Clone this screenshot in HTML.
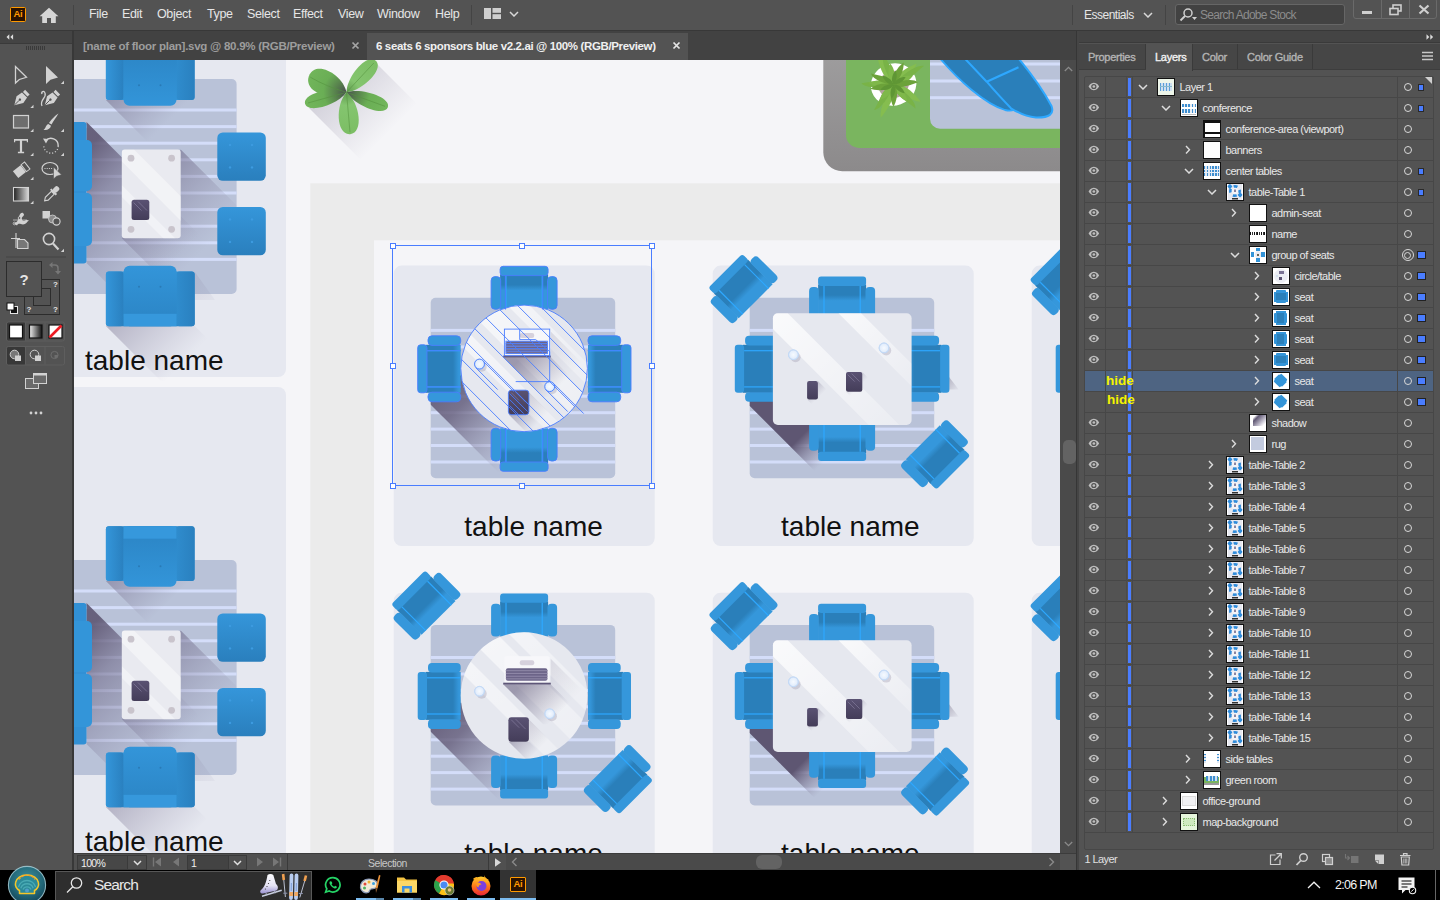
<!DOCTYPE html><html><head><meta charset="utf-8"><title>Adobe Illustrator</title><style>
*{box-sizing:border-box}
html,body{margin:0;padding:0}
body{width:1440px;height:900px;overflow:hidden;position:relative;background:#535353;font-family:"Liberation Sans",sans-serif;color:#dcdcdc;font-size:12px}
.abs{position:absolute}
#menubar{left:0;top:0;width:1440px;height:30px;background:#535353}
#menubar .mi{position:absolute;top:7px;font-size:12.5px;color:#e6e6e6;letter-spacing:-.35px;white-space:nowrap}
#line30{left:0;top:30px;width:1440px;height:1px;background:#383838}
#tabbar{left:74px;top:31px;width:1004px;height:29px;background:#424242}
.tab{position:absolute;top:2px;height:27px;font-size:11.5px;font-weight:bold;letter-spacing:-.2px;white-space:nowrap;padding-top:7px}
#tools{left:0;top:31px;width:72px;height:839px;background:#535353}
#toolsb{left:72px;top:31px;width:2px;height:839px;background:#383838}
#panel{left:1079px;top:31px;width:361px;height:839px;background:#535353}
#panelb{left:1076px;top:31px;width:3px;height:839px;background:#454545;border-left:1.2px solid #363636}
.row{position:absolute;left:0;width:348px;height:21px;border-bottom:1px solid #474747}
.row .nm{position:absolute;top:4px;font-size:11px;color:#e8e8e8;letter-spacing:-.52px;white-space:nowrap}
.th{position:absolute;top:1px;width:18px;height:18px;background:#fff;border:1px solid #111;overflow:hidden}
.tg{position:absolute;left:319px;top:6.5px;width:8px;height:8px;border:1.2px solid #d8d8d8;border-radius:50%}
.sq{position:absolute;left:333px;top:7.5px;width:6.5px;height:6.5px;background:#4a7dff;border:1px solid #2a2a2a}
.sqb{position:absolute;left:332.5px;top:6px;width:8.5px;height:8.5px;background:#4a7dff;border:1px solid #222}
#taskbar{left:0;top:870px;width:1440px;height:30px;background:#000}
#status{left:74px;top:853px;width:1002px;height:17px;background:#505050}
#vscroll{left:1060px;top:60px;width:16px;height:793px;background:#4a4a4a}
</style></head><body><div id="menubar" class="abs"><div class="abs" style="left:10px;top:7px;width:16px;height:15px;background:#2a1200;border:1.3px solid #ff9a00;border-radius:1.5px;color:#ff9a00;font-size:9.5px;font-weight:bold;line-height:12px;text-align:center;letter-spacing:-.3px">Ai</div><svg class="abs" style="left:39px;top:7px" width="20" height="17" viewBox="0 0 20 17"><path d="M10,0.8 L0.6,9.3 L3.2,9.3 L3.2,16 L8,16 L8,11 L12,11 L12,16 L16.8,16 L16.8,9.3 L19.4,9.3 Z" fill="#d6d6d6"/></svg><div class="abs" style="left:73px;top:5px;width:1px;height:20px;background:#444"></div><span class="mi" style="left:89px">File</span><span class="mi" style="left:122px">Edit</span><span class="mi" style="left:157px">Object</span><span class="mi" style="left:207px">Type</span><span class="mi" style="left:247px">Select</span><span class="mi" style="left:293px">Effect</span><span class="mi" style="left:338px">View</span><span class="mi" style="left:377px">Window</span><span class="mi" style="left:435px">Help</span><div class="abs" style="left:471px;top:5px;width:1px;height:20px;background:#444"></div><svg class="abs" style="left:484px;top:8px" width="17" height="11" viewBox="0 0 17 11"><rect x="0" y="0" width="7" height="11" fill="#cfcfcf"/><rect x="8.5" y="0" width="8.5" height="4.8" fill="#cfcfcf"/><rect x="8.5" y="6.2" width="8.5" height="4.8" fill="#cfcfcf"/></svg><svg class="abs" style="left:508.5px;top:10.5px" width="10" height="6" viewBox="0 0 10 6"><path d="M1,1 L5.0,5.0 L9.0,1" fill="none" stroke="#d8d8d8" stroke-width="1.5"/></svg><div class="abs" style="left:1072px;top:5px;width:1px;height:20px;background:#444"></div><span class="mi" style="left:1084px;font-size:12px;letter-spacing:-.5px;top:7.5px">Essentials</span><svg class="abs" style="left:1143.0px;top:12.0px" width="10" height="6" viewBox="0 0 10 6"><path d="M1,1 L5.0,5.0 L9.0,1" fill="none" stroke="#d8d8d8" stroke-width="1.5"/></svg><div class="abs" style="left:1165px;top:5px;width:1px;height:20px;background:#444"></div><div class="abs" style="left:1175px;top:4px;width:170px;height:21px;background:#424242;border:1px solid #666;border-radius:3px"></div><svg class="abs" style="left:1179px;top:8px" width="20" height="14" viewBox="0 0 20 14"><circle cx="9" cy="5" r="4" fill="none" stroke="#d0d0d0" stroke-width="1.5"/><path d="M6,8 L1.5,12.5" stroke="#d0d0d0" stroke-width="1.8"/><path d="M13,9 h5 l-2.5,3z" fill="#d0d0d0"/></svg><span class="mi" style="left:1200px;top:7.5px;color:#8c8c8c;font-size:12px;letter-spacing:-.72px">Search Adobe Stock</span><div class="abs" style="left:1353px;top:-2px;width:84px;height:21px;border:1px solid #6a6a6a;border-radius:3px"></div><div class="abs" style="left:1381px;top:0;width:1px;height:18px;background:#6a6a6a"></div><div class="abs" style="left:1409px;top:0;width:1px;height:18px;background:#6a6a6a"></div><div class="abs" style="left:1362px;top:11px;width:10px;height:3px;background:#cfcfcf"></div><svg class="abs" style="left:1389px;top:4px" width="13" height="12" viewBox="0 0 13 12"><rect x="4" y="1" width="8" height="6" fill="none" stroke="#cfcfcf" stroke-width="1.6"/><rect x="1" y="4.5" width="8" height="6" fill="#535353" stroke="#cfcfcf" stroke-width="1.6"/></svg><svg class="abs" style="left:1418px;top:4px" width="12" height="11" viewBox="0 0 12 11"><path d="M1.5,1.5 L10.5,9.5 M10.5,1.5 L1.5,9.5" stroke="#cfcfcf" stroke-width="2.2"/></svg></div><div id="line30" class="abs"></div><div id="tabbar" class="abs"><div class="tab" style="left:0;width:292.5px;color:#9d9d9d;padding-left:9px;letter-spacing:-.26px">[name of floor plan].svg @ 80.9% (RGB/Preview)</div><svg class="abs" style="left:277px;top:10px" width="9" height="9" viewBox="0 0 9 9"><path d="M1.5,1.5 L7.5,7.5 M7.5,1.5 L1.5,7.5" stroke="#a5a5a5" stroke-width="1.7"/></svg><div class="tab" style="left:292.5px;width:321px;background:#535353;color:#f0f0f0;padding-left:9.5px;letter-spacing:-.37px">6 seats 6 sponsors blue v2.2.ai @ 100% (RGB/Preview)</div><svg class="abs" style="left:598px;top:10px" width="9" height="9" viewBox="0 0 9 9"><path d="M1.5,1.5 L7.5,7.5 M7.5,1.5 L1.5,7.5" stroke="#e6e6e6" stroke-width="1.7"/></svg></div><div id="tools" class="abs"><div class="abs" style="left:0;top:0;width:72px;height:11.5px;background:#444"></div><div class="abs" style="left:0;top:11.5px;width:72px;height:1px;background:#3a3a3a"></div><svg class="abs" style="left:6px;top:3px" width="8" height="6" viewBox="0 0 8 6"><path d="M3.300,0.300 L0.500,3 L3.300,5.700z M7.100,0.300 L4.300,3 L7.100,5.700z" fill="#dcdcdc"/></svg><svg class="abs" style="left:26px;top:15px" width="20" height="5" viewBox="0 0 20 5"><rect x="0" y="0" width="1" height="4" fill="#3a3a3a"/><rect x="2" y="0" width="1" height="4" fill="#3a3a3a"/><rect x="4" y="0" width="1" height="4" fill="#3a3a3a"/><rect x="6" y="0" width="1" height="4" fill="#3a3a3a"/><rect x="8" y="0" width="1" height="4" fill="#3a3a3a"/><rect x="10" y="0" width="1" height="4" fill="#3a3a3a"/><rect x="12" y="0" width="1" height="4" fill="#3a3a3a"/><rect x="14" y="0" width="1" height="4" fill="#3a3a3a"/><rect x="16" y="0" width="1" height="4" fill="#3a3a3a"/><rect x="18" y="0" width="1" height="4" fill="#3a3a3a"/></svg><svg class="abs" style="left:0;top:0" width="72" height="400" viewBox="0 31 72 400"><path d="M15.5,66.5 L15.5,83 L19.3,79.5 L26.5,77.3 Z" fill="none" stroke="#d2d2d2" stroke-width="1.3" stroke-linejoin="miter"/><path d="M46,66 L46,84 L50.5,79.8 L58,77.5 Z" fill="#d2d2d2"/><path d="M64.0,84.0 l0,-3.2 l-3.2,3.2z" fill="#d2d2d2"/><g transform="translate(21,98.5) rotate(45)"><path d="M-3.2,-9 h6.4 v3 h-6.4z M-3.6,-5 h7.2 l1.2,6.5 L0,9.5 L-4.8,1.5z" fill="#d2d2d2"/><circle cx="0" cy="1.5" r="1.2" fill="#535353"/><path d="M0,2.5 V9" stroke="#535353" stroke-width=".9"/></g><path d="M33.5,108.0 l0,-3.2 l-3.2,3.2z" fill="#d2d2d2"/><g transform="translate(51.5,98.5) rotate(45)"><path d="M-3.2,-9 h6.4 v3 h-6.4z M-3.6,-5 h7.2 l1.2,6.5 L0,9.5 L-4.8,1.5z" fill="#d2d2d2"/><circle cx="0" cy="1.5" r="1.2" fill="#535353"/><path d="M0,2.5 V9" stroke="#535353" stroke-width=".9"/></g><path d="M42,106 c-3,-6 5,-8 3,-13 c-1,-3 -4,-1 -3,1" fill="none" stroke="#d2d2d2" stroke-width="1.3"/><rect x="13.5" y="115.5" width="15" height="12.5" fill="#6e6e6e" stroke="#d2d2d2" stroke-width="1.2"/><path d="M33.5,132.0 l0,-3.2 l-3.2,3.2z" fill="#d2d2d2"/><path d="M58.5,113.5 C57,116 53,122 51.5,124.5 L49,123 C50.5,120.5 55.5,115 58.5,113.5Z M48.3,124 L51,125.8 C50.5,129 47,130.5 43.5,129.8 C46,128.5 45.5,125 48.3,124Z" fill="#d2d2d2"/><path d="M64.0,132.0 l0,-3.2 l-3.2,3.2z" fill="#d2d2d2"/><path d="M14,139 h14 v3.3 h-1.2 v-1.6 h-4.7 v11 h2 v1.5 h-6.2 v-1.5 h2 v-11 h-4.7 v1.6 h-1.2z" fill="#d2d2d2"/><path d="M33.5,156.0 l0,-3.2 l-3.2,3.2z" fill="#d2d2d2"/><path d="M45.5,141 A7.2,7.2 0 0 1 58.2,146" fill="none" stroke="#d2d2d2" stroke-width="1.4"/><path d="M43,138.5 l5.5,0.5 l-2.5,4.5z" fill="#d2d2d2"/><path d="M58.2,146 A7.2,7.2 0 1 1 43.8,146" fill="none" stroke="#d2d2d2" stroke-width="1.3" stroke-dasharray="1.1,1.9"/><path d="M64.0,156.0 l0,-3.2 l-3.2,3.2z" fill="#d2d2d2"/><g transform="translate(21.5,170) rotate(-38) scale(.88)"><rect x="-8.500" y="-5" width="11" height="10" fill="#d2d2d2"/><rect x="3.3" y="-5" width="5" height="10" fill="none" stroke="#d2d2d2" stroke-width="1.1"/></g><path d="M33.5,180.0 l0,-3.2 l-3.2,3.2z" fill="#d2d2d2"/><ellipse cx="50" cy="168.5" rx="8" ry="6" fill="none" stroke="#d2d2d2" stroke-width="1.2"/><path d="M44.5,168.5 h8" stroke="#d2d2d2" stroke-width="1.2" stroke-dasharray="1,1.2"/><path d="M53.5,167 L53.5,179 L56.5,176.3 L61.5,174.8 Z" fill="#d2d2d2" stroke="#535353" stroke-width=".6"/><linearGradient id="tgr" x1="0" y1="0" x2="1" y2="0"><stop offset="0" stop-color="#222"/><stop offset="1" stop-color="#d8d8d8"/></linearGradient><rect x="13.5" y="187.5" width="15" height="13.5" fill="url(#tgr)" stroke="#d2d2d2" stroke-width="1.1"/><path d="M33.5,204.0 l0,-3.2 l-3.2,3.2z" fill="#d2d2d2"/><g transform="translate(51,194.5) rotate(45)"><rect x="-2.6" y="-10.5" width="5.2" height="6.5" rx="2" fill="#d2d2d2"/><rect x="-4" y="-4.6" width="8" height="2" fill="#d2d2d2"/><path d="M-2,-2.6 h4 v8.6 l-2,3 l-2,-3z" fill="none" stroke="#d2d2d2" stroke-width="1.1"/></g><path d="M14,223.5 c3,-1 4,-3 5,-7 c1,-4 4,-5 5,-2 c0,2 -3,2 -2,5 c1,3 4,-1 7,1 c-2,1 -3,4 -6,4 c-3,0 -4,-2 -6,1z" fill="#d2d2d2"/><circle cx="14.5" cy="223.5" r="1.3" fill="none" stroke="#d2d2d2" stroke-width=".8"/><circle cx="19.5" cy="218" r="1.3" fill="#535353" stroke="#d2d2d2" stroke-width=".8"/><path d="M13,220 l14,0" stroke="#d2d2d2" stroke-width=".7"/><rect x="42.5" y="211" width="7.5" height="7.5" fill="#d2d2d2"/><circle cx="52.5" cy="219" r="4" fill="#8a8a8a" stroke="#d2d2d2" stroke-width=".8"/><circle cx="56.5" cy="221.5" r="3.6" fill="#535353" stroke="#d2d2d2" stroke-width="1.1"/><path d="M16,233 v15 M11,238.5 h9" stroke="#d2d2d2" stroke-width="1.1"/><path d="M17.5,239.5 h7 l3.5,3.5 v5.5 h-10.5z" fill="#777" stroke="#d2d2d2" stroke-width="1.1"/><circle cx="49" cy="239" r="5.6" fill="none" stroke="#d2d2d2" stroke-width="1.6"/><path d="M53,243.5 L58.5,249.5" stroke="#d2d2d2" stroke-width="2.2"/><path d="M64.0,252.0 l0,-3.2 l-3.2,3.2z" fill="#d2d2d2"/><rect x="6" y="256.5" width="60" height="1" fill="#444"/><rect x="24.5" y="279.5" width="35" height="35" fill="#535353" stroke="#2c2c2c" stroke-width="1"/><rect x="33.5" y="288.5" width="17" height="17" fill="#535353" stroke="#2c2c2c" stroke-width="1"/><rect x="6.5" y="261.5" width="35" height="35" fill="#535353" stroke="#2c2c2c" stroke-width="1"/><text x="24" y="285" font-family="Liberation Sans, sans-serif" font-size="15" font-weight="bold" fill="#e4e4e4" text-anchor="middle">?</text><text x="55.5" y="287.0" font-family="Liberation Sans, sans-serif" font-size="8" font-weight="bold" fill="#e4e4e4" text-anchor="middle">?</text><text x="29.0" y="311.5" font-family="Liberation Sans, sans-serif" font-size="8" font-weight="bold" fill="#e4e4e4" text-anchor="middle">?</text><text x="55.5" y="311.5" font-family="Liberation Sans, sans-serif" font-size="8" font-weight="bold" fill="#e4e4e4" text-anchor="middle">?</text><path d="M51,265 h4 a3,3 0 0 1 3,3 v4" fill="none" stroke="#777" stroke-width="1.5"/><path d="M52.5,262 l-3.5,3 l3.5,3z M55,271 l3,3.5 l3,-3.5z" fill="#777"/><rect x="10.5" y="306.5" width="7" height="7" fill="#111" stroke="#e4e4e4" stroke-width="1"/><rect x="7" y="303" width="7" height="7" fill="#fff" stroke="#111" stroke-width="1"/><rect x="6.5" y="322" width="58" height="19" rx="2" fill="none" stroke="#5e5e5e"/><rect x="7" y="322.5" width="18.5" height="18" rx="1.5" fill="#383838"/><path d="M25.5,322.5 v18 M45,322.5 v18" stroke="#5e5e5e"/><rect x="9.5" y="325" width="13" height="13" fill="#fff" stroke="#111" stroke-width="1.2"/><linearGradient id="tgr2" x1="0" y1="0" x2="1" y2="0"><stop offset="0" stop-color="#eee"/><stop offset="1" stop-color="#111"/></linearGradient><rect x="29.5" y="325" width="12.5" height="13" fill="url(#tgr2)" stroke="#111" stroke-width="1.2"/><rect x="49" y="325" width="13" height="13" fill="#fff" stroke="#111" stroke-width="1.2"/><path d="M49.5,337.5 L61.5,325.5" stroke="#ee1c24" stroke-width="2.6"/><rect x="6.5" y="346.5" width="58" height="18.5" rx="2" fill="none" stroke="#5e5e5e"/><rect x="7" y="347" width="18.5" height="17.5" rx="1.5" fill="#383838"/><path d="M25.5,347 v17.5 M45,347 v17.5" stroke="#5e5e5e"/><circle cx="14.5" cy="354.5" r="4.3" fill="#777" stroke="#d0d0d0" stroke-width="1"/><rect x="15" y="355.5" width="6" height="5.5" fill="#d0d0d0"/><circle cx="34.5" cy="354.5" r="4.3" fill="#535353" stroke="#d0d0d0" stroke-width="1"/><rect x="35" y="355.5" width="6" height="5.5" fill="#d0d0d0"/><circle cx="54.5" cy="355" r="3.6" fill="none" stroke="#6e6e6e" stroke-width="1"/><path d="M54.5,355 h3.5 a3.5,3.5 0 0 1 -3.5,3.5z" fill="#6e6e6e"/><rect x="25.5" y="378.5" width="13" height="10" fill="#6a6a6a" stroke="#d2d2d2" stroke-width="1"/><rect x="33.5" y="373.5" width="13" height="10" fill="#6a6a6a" stroke="#d2d2d2" stroke-width="1"/><rect x="33.5" y="373.5" width="13" height="2" fill="#d2d2d2"/><circle cx="31" cy="413" r="1.4" fill="#d2d2d2"/><circle cx="36" cy="413" r="1.4" fill="#d2d2d2"/><circle cx="41" cy="413" r="1.4" fill="#d2d2d2"/></svg></div><div id="toolsb" class="abs"></div><svg id="cv" width="986" height="793" viewBox="74 60 986 793" style="position:absolute;left:74px;top:60px;display:block"><defs>
<linearGradient id="seatg" x1="0" y1="0" x2="0" y2="1"><stop offset="0" stop-color="#2a7fba"/><stop offset=".5" stop-color="#2a7fba"/><stop offset=".68" stop-color="#3597db"/><stop offset="1" stop-color="#3597db"/></linearGradient>
<linearGradient id="seatgV" x1="0" y1="0" x2="0" y2="1"><stop offset="0" stop-color="#2a7fba"/><stop offset=".3" stop-color="#2a7fba"/><stop offset=".46" stop-color="#3597db"/><stop offset="1" stop-color="#3597db"/></linearGradient>
<linearGradient id="seatgH" x1="0" y1="0" x2="0" y2="1"><stop offset="0" stop-color="#2a7fba"/><stop offset=".78" stop-color="#2a7fba"/><stop offset=".95" stop-color="#3597db"/><stop offset="1" stop-color="#3597db"/></linearGradient>
<linearGradient id="stoolg" x1="0" y1="0" x2="0" y2="1"><stop offset="0" stop-color="#3596da"/><stop offset="1" stop-color="#2a7fbd"/></linearGradient>
<linearGradient id="sofag" x1="0" y1="0" x2="0" y2="1"><stop offset="0" stop-color="#2b84c4"/><stop offset="1" stop-color="#3395d9"/></linearGradient>
<linearGradient id="sofag2" x1="0" y1="0" x2="0" y2="1"><stop offset="0" stop-color="#3395d9"/><stop offset="1" stop-color="#2b84c4"/></linearGradient>
<linearGradient id="armg" x1="0" y1="0" x2="1" y2="0"><stop offset="0" stop-color="#3496da"/><stop offset="1" stop-color="#2a80bf"/></linearGradient>
<linearGradient id="armg2" x1="0" y1="0" x2="1" y2="0"><stop offset="0" stop-color="#2f8ccd"/><stop offset="1" stop-color="#2a80bf"/></linearGradient>
<linearGradient id="shc" gradientUnits="userSpaceOnUse" x1="30" y1="120" x2="112" y2="202"><stop offset="0" stop-color="#5e5672" stop-opacity=".95"/><stop offset=".35" stop-color="#675f7c" stop-opacity=".8"/><stop offset="1" stop-color="#8a85a3" stop-opacity="0"/></linearGradient>
<linearGradient id="shr" gradientUnits="userSpaceOnUse" x1="30" y1="130" x2="110" y2="210"><stop offset="0" stop-color="#5e5672"/><stop offset=".62" stop-color="#5e5672"/><stop offset=".92" stop-color="#8a85a3" stop-opacity="0"/></linearGradient>
<linearGradient id="shs" gradientUnits="userSpaceOnUse" x1="0" y1="0" x2="40" y2="40"><stop offset="0" stop-color="#5e5672" stop-opacity=".55"/><stop offset="1" stop-color="#5e5672" stop-opacity="0"/></linearGradient>
<linearGradient id="gl1" gradientUnits="objectBoundingBox" x1="0" y1="0" x2="1" y2="1"><stop offset="0" stop-color="#fff" stop-opacity=".95"/><stop offset="1" stop-color="#fff" stop-opacity=".25"/></linearGradient>
<linearGradient id="tabg" x1="0" y1="0" x2="0" y2="1"><stop offset="0" stop-color="#5a5273"/><stop offset="1" stop-color="#443d59"/></linearGradient>
<linearGradient id="frameg" x1="0" y1="0" x2="0" y2="1"><stop offset="0" stop-color="#a6a5a6"/><stop offset="1" stop-color="#8c8a8b"/></linearGradient>
<radialGradient id="glassg"><stop offset="0" stop-color="#f6faff"/><stop offset=".7" stop-color="#e4eefc"/><stop offset="1" stop-color="#bcd4f3"/></radialGradient>
<clipPath id="circ"><circle cx="130.4" cy="102.8" r="63.3"/></clipPath>
<clipPath id="rct"><rect x="60.2" y="47.6" width="138.7" height="111.7" rx="5"/></clipPath>
<clipPath id="rugc"><rect x="37" y="32.2" width="184.5" height="180.5" rx="5"/></clipPath>
<g id="chair">
 <rect x="9" y="8" width="48" height="35" fill="url(#seatg)"/>
 <rect x="9" y="0" width="48" height="9.3" rx="3" fill="#3597db"/>
 <rect x="0" y="10.3" width="9.6" height="32.7" rx="4" fill="#3597db"/>
 <rect x="56.4" y="10.3" width="9.6" height="32.7" rx="4" fill="#3597db"/>
 <rect x="14.3" y="9.3" width="1.2" height="33.7" fill="#2ea8ff"/>
 <rect x="50.5" y="9.3" width="1.2" height="33.7" fill="#2ea8ff"/>
</g>
<g id="chairV">
 <rect x="9" y="8" width="48" height="35" fill="url(#seatgV)"/>
 <rect x="9" y="0" width="48" height="9.3" rx="3" fill="#3597db"/>
 <rect x="0" y="10.3" width="9.6" height="32.7" rx="4" fill="#3597db"/>
 <rect x="56.4" y="10.3" width="9.6" height="32.7" rx="4" fill="#3597db"/>
 <rect x="14.3" y="9.3" width="1.2" height="33.7" fill="#2ea8ff"/>
 <rect x="50.5" y="9.3" width="1.2" height="33.7" fill="#2ea8ff"/>
</g>
<g id="chairH">
 <rect x="9" y="8" width="48" height="35" fill="url(#seatgH)"/>
 <rect x="9" y="0" width="48" height="9.3" rx="3" fill="#3597db"/>
 <rect x="0" y="10.3" width="9.6" height="32.7" rx="4" fill="#3597db"/>
 <rect x="56.4" y="10.3" width="9.6" height="32.7" rx="4" fill="#3597db"/>
 <rect x="14.3" y="9.3" width="1.2" height="33.7" fill="#2ea8ff"/>
 <rect x="50.5" y="9.3" width="1.2" height="33.7" fill="#2ea8ff"/>
</g>
<g id="rug">
 <rect x="37" y="32.2" width="184.5" height="180.5" rx="5" fill="#b9c2d8"/>
 <g fill="#d4ddf9"><rect x="37" y="63.3" width="184.5" height="3"/><rect x="37" y="79.8" width="184.5" height="3"/><rect x="37" y="96.2" width="184.5" height="3"/><rect x="37" y="112.6" width="184.5" height="3"/><rect x="37" y="129.1" width="184.5" height="3"/><rect x="37" y="145.6" width="184.5" height="3"/><rect x="37" y="162.0" width="184.5" height="3"/><rect x="37" y="178.4" width="184.5" height="3"/><rect x="37" y="194.9" width="184.5" height="3"/></g>
</g>
<g id="glass"><circle cx="2.2" cy="2.6" r="5" fill="#7a7590" opacity=".25"/><circle cx="0" cy="0" r="5.3" fill="url(#glassg)"/><circle cx="0" cy="0" r="4.9" fill="none" stroke="#c3d9f6" stroke-width=".9"/></g>
<g id="ccard">
 <rect x="0" y="0" width="261" height="280.5" rx="8" fill="#e6e8f0"/>
 <use href="#rug"/>
 <g clip-path="url(#rugc)"><polygon points="34,136 34,110 120,110 200,212 110,212" fill="url(#shc)"/></g>
 <use href="#chairV" transform="translate(97.4,0.7)"/>
 <use href="#chairV" transform="translate(163.4,205.7) rotate(180)"/>
 <use href="#chairH" transform="translate(24,136.2) rotate(-90)"/>
 <use href="#chairH" transform="translate(237.3,70.2) rotate(90)"/>
 <circle cx="130.4" cy="102.8" r="63.3" fill="#e6e8ef"/>
 <g clip-path="url(#circ)">
  <polygon points="60,-14 82,-14 230,134 208,134" fill="url(#gl1)" opacity=".75"/>
  <polygon points="40,10 72,10 230,168 198,168" fill="url(#gl1)" opacity=".8"/>
  <polygon points="40,52 60,52 200,192 180,192" fill="url(#gl1)" opacity=".7"/>
  <polygon points="110,91 157,91 157,64 190,97 190,140 159,140" fill="#7a7390" opacity=".0"/>
  <polygon points="109.5,91.5 157.5,91.5 200,134 152,134" fill="url(#shs)" transform="translate(0,0)" opacity=".001"/>
 </g>
 <g clip-path="url(#circ)">
  <linearGradient id="lsh" gradientUnits="userSpaceOnUse" x1="130" y1="90" x2="163" y2="123"><stop offset="0" stop-color="#6b6482" stop-opacity=".6"/><stop offset="1" stop-color="#6b6482" stop-opacity="0"/></linearGradient>
  <polygon points="109.5,91.5 157,91.5 197,131.5 149.5,131.5" fill="url(#lsh)"/><polygon points="157,66 157,91.5 197,131.5 197,106" fill="url(#lsh)" opacity=".3"/>
  <linearGradient id="tsh" gradientUnits="userSpaceOnUse" x1="125" y1="137" x2="145" y2="157"><stop offset="0" stop-color="#6b6482" stop-opacity=".5"/><stop offset="1" stop-color="#6b6482" stop-opacity="0"/></linearGradient>
  <polygon points="115,149 135.5,149 160,173.5 139.5,173.5" fill="url(#tsh)"/><polygon points="135.5,127 135.5,149 160,173.5 160,151.5" fill="url(#tsh)" opacity=".5"/>
 </g>
 <use href="#glass" transform="translate(85.8,98.5)"/>
 <use href="#glass" transform="translate(156,121)"/>
 <rect x="110.7" y="63.5" width="45.3" height="26.6" rx="1.5" fill="#f7f7fa"/>
 <rect x="109.5" y="90" width="47.6" height="1.8" fill="#5e5678"/>
 <rect x="126.1" y="67.5" width="14.4" height="5" rx="2" fill="#d6d1dd"/>
 <rect x="112.2" y="75.6" width="41.5" height="12.4" rx="2" fill="#6c6488"/>
 <g fill="#8d86a6"><rect x="112.2" y="77.4" width="41.5" height="1.1"/><rect x="112.2" y="80.2" width="41.5" height="1.1"/><rect x="112.2" y="83" width="41.5" height="1.1"/><rect x="112.2" y="85.6" width="41.5" height="1.1"/></g>
 <rect x="114.7" y="124.6" width="20.5" height="24.5" rx="3" fill="url(#tabg)"/>
 <path d="M117.5,127 l8,8 M122,126.5 l10,10" stroke="#8f88a8" stroke-width=".8" opacity=".7"/>
</g>
<g id="rcard">
 <rect x="0" y="0" width="261" height="280.5" rx="8" fill="#e6e8f0"/>
 <use href="#rug"/>
 <g clip-path="url(#rugc)"><polygon points="32.7,136.1 32.7,110 150,110 150,212 108.6,212" fill="url(#shr)"/></g>
 <polygon points="236.7,70 236.7,112 262,137.5 262,95.3" fill="url(#shs)" transform="translate(0,0)" opacity=".0"/>
 <linearGradient id="rsh2" gradientUnits="userSpaceOnUse" x1="232" y1="112" x2="246" y2="126"><stop offset="0" stop-color="#5e5672" stop-opacity=".6"/><stop offset="1" stop-color="#5e5672" stop-opacity="0"/></linearGradient>
 <polygon points="228,104 236.7,112 246,124 228,124" fill="url(#rsh2)" opacity=".7"/>
 <use href="#chairV" transform="translate(96.4,11)"/>
 <use href="#chairV" transform="translate(162.4,195.4) rotate(180)"/>
 <use href="#chairH" transform="translate(22.1,136.2) rotate(-90)"/>
 <use href="#chairH" transform="translate(236.7,70.2) rotate(90)"/>
 <rect x="60.2" y="47.6" width="138.7" height="111.7" rx="5" fill="#e6e8ef"/>
 <g clip-path="url(#rct)">
  <polygon points="60.2,47.6 75,47.6 186.7,159.3 156,159.3 60.2,63.5" fill="url(#gl1)" opacity=".85"/>
  <polygon points="125.8,47.6 148.4,47.6 198.9,98.1 198.9,120.7" fill="url(#gl1)" opacity=".8"/>
  <linearGradient id="psh" gradientUnits="userSpaceOnUse" x1="0" y1="0" x2="14" y2="14"><stop offset="0" stop-color="#6b6482" stop-opacity=".5"/><stop offset="1" stop-color="#6b6482" stop-opacity="0"/></linearGradient>
  <polygon points="0,18.6 10.8,18.6 10.8,0 26,15 26,44" fill="url(#psh)" transform="translate(94.4,115.3)"/>
  <polygon points="0,19.9 16.3,19.9 16.3,0 30,14 30,50" fill="url(#psh)" transform="translate(133.3,106.3)"/>
 </g>
 <use href="#glass" transform="translate(80.7,89.1)"/>
 <use href="#glass" transform="translate(171.3,82.3)"/>
 <rect x="94.4" y="115.3" width="10.8" height="18.6" rx="2" fill="url(#tabg)"/>
 <rect x="133.3" y="106.3" width="16.3" height="19.9" rx="2" fill="url(#tabg)"/>
 <path d="M135,109 l7,7 M139,108 l8,8" stroke="#8f88a8" stroke-width=".8" opacity=".7"/>
</g>
</defs><rect x="74" y="60" width="986" height="793" fill="#f5f5f8"/><rect x="310.3" y="183.3" width="760" height="700" fill="#ebebeb"/><rect x="374" y="240.3" width="700" height="700" fill="#f5f5f8"/><rect x="40" y="20" width="246" height="357" rx="8" fill="#e6e8f0"/><rect x="40" y="387" width="246" height="520" rx="8" fill="#e6e8f0"/><g transform="translate(0.00,0.00) scale(1.0000)"><rect x="30" y="79" width="206.6" height="215" rx="5" fill="#b9c2d8"/><g fill="#d4ddf9"><rect x="30" y="108.5" width="206.6" height="3"/><rect x="30" y="125.1" width="206.6" height="3"/><rect x="30" y="141.7" width="206.6" height="3"/><rect x="30" y="158.3" width="206.6" height="3"/><rect x="30" y="174.9" width="206.6" height="3"/><rect x="30" y="191.5" width="206.6" height="3"/><rect x="30" y="208.1" width="206.6" height="3"/><rect x="30" y="224.7" width="206.6" height="3"/><rect x="30" y="241.3" width="206.6" height="3"/><rect x="30" y="257.9" width="206.6" height="3"/></g><clipPath id="sarug"><rect x="30" y="79" width="206.6" height="215" rx="5"/></clipPath><linearGradient id="sas1" gradientUnits="userSpaceOnUse" x1="86" y1="150" x2="185" y2="249"><stop offset="0" stop-color="#5e5672" stop-opacity=".9"/><stop offset=".3" stop-color="#6d6685" stop-opacity=".55"/><stop offset="1" stop-color="#8a85a3" stop-opacity="0"/></linearGradient><linearGradient id="sas2" gradientUnits="userSpaceOnUse" x1="150" y1="180" x2="212" y2="242"><stop offset="0" stop-color="#6d6685" stop-opacity=".55"/><stop offset="1" stop-color="#8a85a3" stop-opacity="0"/></linearGradient><linearGradient id="sas3" gradientUnits="userSpaceOnUse" x1="110" y1="100" x2="150" y2="140"><stop offset="0" stop-color="#7b7592" stop-opacity=".55"/><stop offset="1" stop-color="#8a85a3" stop-opacity="0"/></linearGradient><g clip-path="url(#sarug)"><polygon points="86.5,122 86.5,263 130,306 260,306 260,295.5" fill="url(#sas1)"/><polygon points="180.7,149.4 121.8,238.2 190,306 260,306 260,228.7" fill="url(#sas2)"/><polygon points="105.9,100 194.5,100 240,145.5 151.4,145.5" fill="url(#sas3)"/></g><linearGradient id="sas4" gradientUnits="userSpaceOnUse" x1="110" y1="326" x2="165" y2="381"><stop offset="0" stop-color="#7b7592" stop-opacity=".45"/><stop offset="1" stop-color="#8a85a3" stop-opacity="0"/></linearGradient><polygon points="105.9,326 194.7,326 250,381 161,381" fill="url(#sas4)"/><polygon points="194.5,271.5 194.5,300 215,300" fill="url(#sas4)" opacity=".5"/><rect x="105.9" y="45.2" width="88.7" height="54.8" rx="3" fill="url(#sofag)"/><rect x="105.9" y="45.2" width="17.7" height="54.8" rx="3" fill="url(#armg)"/><rect x="176.5" y="45.2" width="18.1" height="54.8" rx="3" fill="url(#armg2)"/><rect x="123.5" y="45.2" width="53" height="60.6" rx="6" fill="url(#sofag)"/><rect x="123.5" y="45.2" width="53" height="12.5" fill="#3698dc"/><circle cx="139" cy="85.3" r="1" fill="#2a7ab5"/><circle cx="160.5" cy="85.3" r="1" fill="#2a7ab5"/><rect x="50" y="122" width="36.5" height="141.5" rx="3" fill="#3190d5"/><rect x="50" y="140" width="42" height="51" rx="5" fill="#3395d9"/><rect x="50" y="193" width="42" height="53" rx="5" fill="#3395d9"/><rect x="217.3" y="132.4" width="48.5" height="48.4" rx="5.5" fill="url(#stoolg)"/><circle cx="230.0" cy="144.9" r="1.2" fill="#3d9be0"/><circle cx="230.0" cy="167.4" r="1.2" fill="#3d9be0"/><circle cx="252.0" cy="144.9" r="1.2" fill="#3d9be0"/><circle cx="252.0" cy="167.4" r="1.2" fill="#3d9be0"/><rect x="217.3" y="206.9" width="48.5" height="48.4" rx="5.5" fill="url(#stoolg)"/><circle cx="230.0" cy="219.4" r="1.2" fill="#3d9be0"/><circle cx="230.0" cy="241.9" r="1.2" fill="#3d9be0"/><circle cx="252.0" cy="219.4" r="1.2" fill="#3d9be0"/><circle cx="252.0" cy="241.9" r="1.2" fill="#3d9be0"/><rect x="121.8" y="149.4" width="58.9" height="88.8" rx="3" fill="#e9eaf0"/><clipPath id="satb"><rect x="121.8" y="149.4" width="58.9" height="88.8" rx="3"/></clipPath><g clip-path="url(#satb)"><polygon points="121.8,149.4 134,149.4 200,215.4 200,240 121.8,161.6" fill="#fff" opacity=".42"/><polygon points="121.8,185 121.8,197 172,247 184,247" fill="#fff" opacity=".38"/></g><circle cx="131.0" cy="158.2" r="3.4" fill="#c9c4cc"/><circle cx="171.6" cy="158.2" r="3.4" fill="#c9c4cc"/><circle cx="131.0" cy="229.3" r="3.4" fill="#c9c4cc"/><circle cx="171.6" cy="229.3" r="3.4" fill="#c9c4cc"/><rect x="131.6" y="199.7" width="17.7" height="20.3" rx="2.5" fill="url(#tabg)"/><path d="M133.5,202.5 l8,8 M138,201.5 l9,9" stroke="#8f88a8" stroke-width=".8" opacity=".7"/><rect x="105.9" y="271.5" width="88.8" height="54.8" rx="3" fill="url(#sofag2)"/><rect x="105.9" y="271.5" width="17.7" height="54.8" rx="3" fill="url(#armg)"/><rect x="176.5" y="271.5" width="18.2" height="54.8" rx="3" fill="url(#armg2)"/><rect x="123.6" y="265.8" width="53" height="60.5" rx="6" fill="url(#sofag2)"/><rect x="123.6" y="313.8" width="53" height="12.5" fill="#3698dc"/><circle cx="139" cy="286.7" r="1" fill="#2a7ab5"/><circle cx="160.5" cy="286.7" r="1" fill="#2a7ab5"/></g><g transform="translate(0.00,481.00) scale(1.0000)"><rect x="30" y="79" width="206.6" height="215" rx="5" fill="#b9c2d8"/><g fill="#d4ddf9"><rect x="30" y="108.5" width="206.6" height="3"/><rect x="30" y="125.1" width="206.6" height="3"/><rect x="30" y="141.7" width="206.6" height="3"/><rect x="30" y="158.3" width="206.6" height="3"/><rect x="30" y="174.9" width="206.6" height="3"/><rect x="30" y="191.5" width="206.6" height="3"/><rect x="30" y="208.1" width="206.6" height="3"/><rect x="30" y="224.7" width="206.6" height="3"/><rect x="30" y="241.3" width="206.6" height="3"/><rect x="30" y="257.9" width="206.6" height="3"/></g><clipPath id="sbrug"><rect x="30" y="79" width="206.6" height="215" rx="5"/></clipPath><linearGradient id="sbs1" gradientUnits="userSpaceOnUse" x1="86" y1="150" x2="185" y2="249"><stop offset="0" stop-color="#5e5672" stop-opacity=".9"/><stop offset=".3" stop-color="#6d6685" stop-opacity=".55"/><stop offset="1" stop-color="#8a85a3" stop-opacity="0"/></linearGradient><linearGradient id="sbs2" gradientUnits="userSpaceOnUse" x1="150" y1="180" x2="212" y2="242"><stop offset="0" stop-color="#6d6685" stop-opacity=".55"/><stop offset="1" stop-color="#8a85a3" stop-opacity="0"/></linearGradient><linearGradient id="sbs3" gradientUnits="userSpaceOnUse" x1="110" y1="100" x2="150" y2="140"><stop offset="0" stop-color="#7b7592" stop-opacity=".55"/><stop offset="1" stop-color="#8a85a3" stop-opacity="0"/></linearGradient><g clip-path="url(#sbrug)"><polygon points="86.5,122 86.5,263 130,306 260,306 260,295.5" fill="url(#sbs1)"/><polygon points="180.7,149.4 121.8,238.2 190,306 260,306 260,228.7" fill="url(#sbs2)"/><polygon points="105.9,100 194.5,100 240,145.5 151.4,145.5" fill="url(#sbs3)"/></g><linearGradient id="sbs4" gradientUnits="userSpaceOnUse" x1="110" y1="326" x2="165" y2="381"><stop offset="0" stop-color="#7b7592" stop-opacity=".45"/><stop offset="1" stop-color="#8a85a3" stop-opacity="0"/></linearGradient><polygon points="105.9,326 194.7,326 250,381 161,381" fill="url(#sbs4)"/><polygon points="194.5,271.5 194.5,300 215,300" fill="url(#sbs4)" opacity=".5"/><rect x="105.9" y="45.2" width="88.7" height="54.8" rx="3" fill="url(#sofag)"/><rect x="105.9" y="45.2" width="17.7" height="54.8" rx="3" fill="url(#armg)"/><rect x="176.5" y="45.2" width="18.1" height="54.8" rx="3" fill="url(#armg2)"/><rect x="123.5" y="45.2" width="53" height="60.6" rx="6" fill="url(#sofag)"/><rect x="123.5" y="45.2" width="53" height="12.5" fill="#3698dc"/><circle cx="139" cy="85.3" r="1" fill="#2a7ab5"/><circle cx="160.5" cy="85.3" r="1" fill="#2a7ab5"/><rect x="50" y="122" width="36.5" height="141.5" rx="3" fill="#3190d5"/><rect x="50" y="140" width="42" height="51" rx="5" fill="#3395d9"/><rect x="50" y="193" width="42" height="53" rx="5" fill="#3395d9"/><rect x="217.3" y="132.4" width="48.5" height="48.4" rx="5.5" fill="url(#stoolg)"/><circle cx="230.0" cy="144.9" r="1.2" fill="#3d9be0"/><circle cx="230.0" cy="167.4" r="1.2" fill="#3d9be0"/><circle cx="252.0" cy="144.9" r="1.2" fill="#3d9be0"/><circle cx="252.0" cy="167.4" r="1.2" fill="#3d9be0"/><rect x="217.3" y="206.9" width="48.5" height="48.4" rx="5.5" fill="url(#stoolg)"/><circle cx="230.0" cy="219.4" r="1.2" fill="#3d9be0"/><circle cx="230.0" cy="241.9" r="1.2" fill="#3d9be0"/><circle cx="252.0" cy="219.4" r="1.2" fill="#3d9be0"/><circle cx="252.0" cy="241.9" r="1.2" fill="#3d9be0"/><rect x="121.8" y="149.4" width="58.9" height="88.8" rx="3" fill="#e9eaf0"/><clipPath id="sbtb"><rect x="121.8" y="149.4" width="58.9" height="88.8" rx="3"/></clipPath><g clip-path="url(#sbtb)"><polygon points="121.8,149.4 134,149.4 200,215.4 200,240 121.8,161.6" fill="#fff" opacity=".42"/><polygon points="121.8,185 121.8,197 172,247 184,247" fill="#fff" opacity=".38"/></g><circle cx="131.0" cy="158.2" r="3.4" fill="#c9c4cc"/><circle cx="171.6" cy="158.2" r="3.4" fill="#c9c4cc"/><circle cx="131.0" cy="229.3" r="3.4" fill="#c9c4cc"/><circle cx="171.6" cy="229.3" r="3.4" fill="#c9c4cc"/><rect x="131.6" y="199.7" width="17.7" height="20.3" rx="2.5" fill="url(#tabg)"/><path d="M133.5,202.5 l8,8 M138,201.5 l9,9" stroke="#8f88a8" stroke-width=".8" opacity=".7"/><rect x="105.9" y="271.5" width="88.8" height="54.8" rx="3" fill="url(#sofag2)"/><rect x="105.9" y="271.5" width="17.7" height="54.8" rx="3" fill="url(#armg)"/><rect x="176.5" y="271.5" width="18.2" height="54.8" rx="3" fill="url(#armg2)"/><rect x="123.6" y="265.8" width="53" height="60.5" rx="6" fill="url(#sofag2)"/><rect x="123.6" y="313.8" width="53" height="12.5" fill="#3698dc"/><circle cx="139" cy="286.7" r="1" fill="#2a7ab5"/><circle cx="160.5" cy="286.7" r="1" fill="#2a7ab5"/></g><text x="85.0" y="369.6" font-family="Liberation Sans, sans-serif" font-size="28" fill="#111">table name</text><text x="85.0" y="850.6" font-family="Liberation Sans, sans-serif" font-size="28" fill="#111">table name</text><g id="plant">
<linearGradient id="plsh" gradientUnits="userSpaceOnUse" x1="325" y1="80" x2="383" y2="138"><stop offset="0" stop-color="#9a95aa" stop-opacity=".42"/><stop offset="1" stop-color="#9a95aa" stop-opacity="0"/></linearGradient>
<polygon points="309,108 366,165 430,165 430,117 377,64 346,92" fill="url(#plsh)"/>
<g transform="translate(346.5,92.3)">
<radialGradient id="lfA" gradientUnits="userSpaceOnUse" cx="0" cy="0" r="42"><stop offset="0" stop-color="#4a4a55"/><stop offset=".22" stop-color="#557a4c"/><stop offset=".55" stop-color="#6aae55"/><stop offset="1" stop-color="#72b65b"/></radialGradient>
<radialGradient id="lfB" gradientUnits="userSpaceOnUse" cx="0" cy="0" r="44"><stop offset="0" stop-color="#5f9a4e"/><stop offset=".3" stop-color="#84c56f"/><stop offset="1" stop-color="#7bbd63"/></radialGradient>
<path d="M0,0 C-17.4,-11.5 -18.6,-41.0 -0.9,-41.0 C15.0,-41.0 14.4,-11.5 0,0Z" fill="url(#lfA)" transform="rotate(-63)"/>
<path d="M0,0 C-9.8,-12.0 -10.6,-43.0 0.0,-43.0 C10.6,-43.0 9.8,-12.0 0,0Z" fill="url(#lfA)" transform="rotate(-105.5)"/>
<path d="M0,0 C-9.8,-12.3 -10.6,-44.0 0.0,-44.0 C10.6,-44.0 9.8,-12.3 0,0Z" fill="url(#lfA)" transform="rotate(110)"/>
<path d="M0,0 C-10.9,-12.0 -11.9,-43.0 0.0,-43.0 C11.9,-43.0 10.9,-12.0 0,0Z" fill="url(#lfB)" transform="rotate(43)"/>
<path d="M0,0 C-12.6,-11.8 -13.8,-42.0 0.0,-42.0 C13.8,-42.0 12.6,-11.8 0,0Z" fill="url(#lfB)" transform="rotate(175)"/>
<g stroke="#55933f" stroke-width=".7" opacity=".75" fill="none"><path d="M0,0 Q-4,-20 -3,-39" transform="rotate(-63)"/><path d="M0,0 L0,-40" transform="rotate(43)"/><path d="M0,0 L0,-41" transform="rotate(110)"/><path d="M0,0 L0,-40" transform="rotate(175)"/><path d="M0,0 L0,-40" transform="rotate(-105.5)"/></g>
</g></g><g id="green">
<rect x="823.3" y="0" width="300" height="171.2" rx="19" fill="url(#frameg)"/>
<rect x="846" y="0" width="300" height="147.9" rx="13" fill="#7ab55f"/>
<rect x="930" y="0" width="200" height="128.8" rx="10" fill="#b9c2d8"/>
<g fill="#d4ddf9"><rect x="930" y="62.5" width="140" height="3"/><rect x="930" y="79.5" width="140" height="3"/><rect x="930" y="96.2" width="140" height="3"/></g>
<g transform="translate(893.6,84.5)"><ellipse rx="23" ry="21" fill="#fff" transform="rotate(-20)"/><ellipse rx="15.5" ry="13.5" fill="#b3a39d" transform="rotate(-20)"/><path d="M0,0 C-5.5,-9.4 -11.4,-25.1 -7.0,-31.4 C-4.2,-22.0 5.5,-9.4 0,0Z" fill="#79b347" transform="rotate(-75)"/><path d="M0,0 C-5.5,-10.3 2.6,-27.5 7.0,-34.3 C9.8,-24.0 5.5,-10.3 0,0Z" fill="#85bd4f" transform="rotate(-40)"/><path d="M0,0 C-5.5,-9.3 -11.4,-24.7 -7.0,-30.9 C-4.2,-21.7 5.5,-9.3 0,0Z" fill="#79b347" transform="rotate(-5)"/><path d="M0,0 C-5.5,-9.0 2.6,-24.1 7.0,-30.1 C9.8,-21.1 5.5,-9.0 0,0Z" fill="#85bd4f" transform="rotate(35)"/><path d="M0,0 C-5.5,-10.4 -11.4,-27.8 -7.0,-34.8 C-4.2,-24.4 5.5,-10.4 0,0Z" fill="#79b347" transform="rotate(70)"/><path d="M0,0 C-5.5,-9.4 2.6,-25.1 7.0,-31.3 C9.8,-21.9 5.5,-9.4 0,0Z" fill="#85bd4f" transform="rotate(110)"/><path d="M0,0 C-5.5,-9.5 -11.4,-25.3 -7.0,-31.7 C-4.2,-22.2 5.5,-9.5 0,0Z" fill="#79b347" transform="rotate(150)"/><path d="M0,0 C-5.5,-10.5 2.6,-28.0 7.0,-35.0 C9.8,-24.5 5.5,-10.5 0,0Z" fill="#85bd4f" transform="rotate(190)"/><path d="M0,0 C-5.5,-9.4 -11.4,-25.0 -7.0,-31.3 C-4.2,-21.9 5.5,-9.4 0,0Z" fill="#79b347" transform="rotate(230)"/><path d="M0,0 C-5.0,-7.5 0.0,-20.0 4.0,-25.0 C6.5,-17.5 5.0,-7.5 0,0Z" fill="#7fb84a" transform="rotate(-95)"/><path d="M0,0 C-5.0,-7.4 -8.0,-19.8 -4.0,-24.8 C-1.5,-17.4 5.0,-7.4 0,0Z" fill="#6ca23a" transform="rotate(-55)"/><path d="M0,0 C-5.0,-6.3 0.0,-16.8 4.0,-21.0 C6.5,-14.7 5.0,-6.3 0,0Z" fill="#7fb84a" transform="rotate(-20)"/><path d="M0,0 C-5.0,-7.1 0.0,-19.0 4.0,-23.8 C6.5,-16.6 5.0,-7.1 0,0Z" fill="#6ca23a" transform="rotate(15)"/><path d="M0,0 C-5.0,-6.2 0.0,-16.4 4.0,-20.5 C6.5,-14.4 5.0,-6.2 0,0Z" fill="#7fb84a" transform="rotate(55)"/><path d="M0,0 C-5.0,-7.2 -8.0,-19.2 -4.0,-24.0 C-1.5,-16.8 5.0,-7.2 0,0Z" fill="#6ca23a" transform="rotate(95)"/><path d="M0,0 C-5.0,-6.3 0.0,-16.9 4.0,-21.1 C6.5,-14.7 5.0,-6.3 0,0Z" fill="#7fb84a" transform="rotate(130)"/><path d="M0,0 C-5.0,-6.5 0.0,-17.3 4.0,-21.7 C6.5,-15.2 5.0,-6.5 0,0Z" fill="#6ca23a" transform="rotate(170)"/><path d="M0,0 C-5.0,-6.0 0.0,-16.0 4.0,-20.0 C6.5,-14.0 5.0,-6.0 0,0Z" fill="#7fb84a" transform="rotate(210)"/><path d="M0,0 C-5.0,-7.0 0.0,-18.7 4.0,-23.4 C6.5,-16.4 5.0,-7.0 0,0Z" fill="#6ca23a" transform="rotate(250)"/><path d="M0,0 C-3.5,-4.2 -0.8,-11.2 2.0,-14.0 C3.8,-9.8 3.5,-4.2 0,0Z" fill="#5f9635" transform="rotate(-60)"/><path d="M0,0 C-3.5,-4.2 -0.8,-11.2 2.0,-14.0 C3.8,-9.8 3.5,-4.2 0,0Z" fill="#5f9635" transform="rotate(0)"/><path d="M0,0 C-3.5,-4.2 -0.8,-11.2 2.0,-14.0 C3.8,-9.8 3.5,-4.2 0,0Z" fill="#5f9635" transform="rotate(50)"/><path d="M0,0 C-3.5,-4.2 -0.8,-11.2 2.0,-14.0 C3.8,-9.8 3.5,-4.2 0,0Z" fill="#5f9635" transform="rotate(120)"/><path d="M0,0 C-3.5,-4.2 -0.8,-11.2 2.0,-14.0 C3.8,-9.8 3.5,-4.2 0,0Z" fill="#5f9635" transform="rotate(180)"/><path d="M0,0 C-3.5,-4.2 -0.8,-11.2 2.0,-14.0 C3.8,-9.8 3.5,-4.2 0,0Z" fill="#5f9635" transform="rotate(240)"/></g>
<path d="M938,56 C 958,80 985,104 1005,110 C 1014,112 1017,108 1012,104 L 966,56 Z" fill="#2a7fba" stroke="#2ea8ff" stroke-width="1.8"/>
<path d="M962.4,56 L986.7,81.700 Q 1000,97 1011,108.300 Q 1024,116.500 1036,117.500 Q 1056,118 1051.500,106 Q 1040,84 1016.500,56 Z" fill="#2a7fba" stroke="#2ea8ff" stroke-width="2"/>
<path d="M986.700,81.700 L1018.500,67.200" stroke="#2ea8ff" stroke-width="2.200"/>
</g><use href="#ccard" x="0" y="0" transform="translate(393.7,265.6)"/><use href="#rcard" transform="translate(712.7,265.6)"/><use href="#ccard" transform="translate(1031.7,265.6)"/><use href="#ccard" transform="translate(393.7,592.7)"/><use href="#rcard" transform="translate(712.7,592.7)"/><use href="#ccard" transform="translate(1031.7,592.7)"/><use href="#chair" transform="translate(744.0,289.6) rotate(-45) translate(-33,-26.5)"/><use href="#chair" transform="translate(934.6,453.9) rotate(135) translate(-33,-26.5)"/><use href="#chair" transform="translate(1065.2,281.6) rotate(-45) translate(-33,-26.5)"/><use href="#chair" transform="translate(744.0,616.7) rotate(-45) translate(-33,-26.5)"/><use href="#chair" transform="translate(934.6,781.0) rotate(135) translate(-33,-26.5)"/><use href="#chair" transform="translate(1065.2,607.7) rotate(-45) translate(-33,-26.5)"/><use href="#chair" transform="translate(426.9,606.2) rotate(-45) translate(-33,-26.5)"/><use href="#chair" transform="translate(617.3,778.7) rotate(135) translate(-33,-26.5)"/><text x="464.3" y="535.9" font-family="Liberation Sans, sans-serif" font-size="28" fill="#111">table name</text><text x="781.1" y="535.9" font-family="Liberation Sans, sans-serif" font-size="28" fill="#111">table name</text><text x="464.3" y="863.0" font-family="Liberation Sans, sans-serif" font-size="28" fill="#111">table name</text><text x="781.1" y="863.0" font-family="Liberation Sans, sans-serif" font-size="28" fill="#111">table name</text><g id="sel" fill="none" stroke="#4a7dff" stroke-width="1">
<g transform="translate(393.7,265.6)" stroke-width=".9">
 <circle cx="130.4" cy="102.8" r="63.3"/>
 <g clip-path="url(#circ)"><path d="M40,0 l200,200 M62,0 l200,200 M84,0 l200,200 M106,0 l200,200 M128,0 l200,200 M18,0 l200,200 M-4,0 l200,200 M-26,0 l200,200 M-48,0 l200,200 M-70,0 l200,200"/></g>
 <rect x="110.7" y="63.5" width="45.3" height="26.6"/><rect x="112.2" y="75.6" width="41.5" height="12.4"/>
 <path d="M126,64 v10 h16 l14,12 v30 h-34 M112.5,78 h41 M112.5,80.5 h41 M112.5,83 h41 M112.5,85.5 h41"/>
 <rect x="114.7" y="124.6" width="20.5" height="24.5" rx="3"/><path d="M116,128 l18,18 M116,134 l14,14 M122,126 l13,13 M116,140 l9,9"/>
 <circle cx="85.8" cy="98.5" r="5"/><circle cx="156" cy="121" r="5"/>
 <path d="M82,102 l22,22 M90,96 l30,30 M152,124 l22,22 M160,118 l30,30"/>
 <g id="so1"><rect x="106.4" y="0.7" width="48" height="9.3" rx="3"/><rect x="97.4" y="11" width="9.6" height="32.7" rx="4"/><rect x="153.8" y="11" width="9.6" height="32.7" rx="4"/><path d="M111.7,10 v34 M149.1,10 v34"/></g>
 <g transform="translate(260.8,206.4) rotate(180)"><rect x="106.4" y="0.7" width="48" height="9.3" rx="3"/><rect x="97.4" y="11" width="9.6" height="32.7" rx="4"/><rect x="153.8" y="11" width="9.6" height="32.7" rx="4"/><path d="M111.7,10 v34 M149.1,10 v34"/></g>
 <g transform="translate(24,136.2) rotate(-90)"><rect x="9" y="0" width="48" height="9.3" rx="3"/><rect x="0" y="10.3" width="9.6" height="32.7" rx="4"/><rect x="56.4" y="10.3" width="9.6" height="32.7" rx="4"/><path d="M14.9,9.3 v34 M51.1,9.3 v34"/></g>
 <g transform="translate(237.3,70.2) rotate(90)"><rect x="9" y="0" width="48" height="9.3" rx="3"/><rect x="0" y="10.3" width="9.6" height="32.7" rx="4"/><rect x="56.4" y="10.3" width="9.6" height="32.7" rx="4"/><path d="M14.9,9.3 v34 M51.1,9.3 v34"/></g>
</g>
<rect x="392.5" y="245.5" width="259" height="240" shape-rendering="crispEdges"/>
<g fill="#fff" shape-rendering="crispEdges"><rect x="390.0" y="243.0" width="5" height="5"/><rect x="390.0" y="363.0" width="5" height="5"/><rect x="390.0" y="483.0" width="5" height="5"/><rect x="519.5" y="243.0" width="5" height="5"/><rect x="519.5" y="483.0" width="5" height="5"/><rect x="649.0" y="243.0" width="5" height="5"/><rect x="649.0" y="363.0" width="5" height="5"/><rect x="649.0" y="483.0" width="5" height="5"/></g></g></svg><div id="vscroll" class="abs"></div><svg class="abs" style="left:1064px;top:66px" width="9" height="6" viewBox="0 0 9 6"><path d="M0.8,5 L4.5,1.3 L8.2,5" fill="none" stroke="#8a8a8a" stroke-width="1.3"/></svg><svg class="abs" style="left:1064px;top:841px" width="9" height="6" viewBox="0 0 9 6"><path d="M0.8,1 L4.5,4.700 L8.200,1" fill="none" stroke="#8a8a8a" stroke-width="1.300"/></svg><div class="abs" style="left:1062.5px;top:439.5px;width:13px;height:24px;background:#636363;border-radius:5px"></div><div id="status" class="abs"><div class="abs" style="left:0;top:0;width:1002px;height:1px;background:#3c3c3c"></div><div class="abs" style="left:3px;top:1.5px;width:51px;height:15.5px;background:#474747;border:1px solid #3a3a3a"></div><span class="abs" style="left:7px;top:3.5px;font-size:10.5px;color:#f0f0f0;letter-spacing:-.7px">100%</span><div class="abs" style="left:54px;top:1.5px;width:19px;height:15.5px;background:#4d4d4d;border:1px solid #3a3a3a;border-left:none"></div><svg class="abs" style="left:58.5px;top:6.5px" width="9" height="6" viewBox="0 0 9 6"><path d="M1,1 L4.5,4.5 L8.0,1" fill="none" stroke="#e0e0e0" stroke-width="1.5"/></svg><svg class="abs" style="left:78px;top:4px" width="32" height="10" viewBox="0 0 32 10"><path d="M1.5,0.5 v9" stroke="#777" stroke-width="1.4"/><path d="M9,0.5 L3,5 L9,9.5z M27,0.5 L21,5 L27,9.5z" fill="#777"/></svg><div class="abs" style="left:113px;top:1.5px;width:42px;height:15.5px;background:#434343;border:1px solid #3a3a3a"></div><span class="abs" style="left:117px;top:3.5px;font-size:10.5px;color:#f0f0f0">1</span><div class="abs" style="left:155px;top:1.5px;width:18px;height:15.5px;background:#4d4d4d;border:1px solid #3a3a3a;border-left:none"></div><svg class="abs" style="left:159.0px;top:6.5px" width="9" height="6" viewBox="0 0 9 6"><path d="M1,1 L4.5,4.5 L8.0,1" fill="none" stroke="#e0e0e0" stroke-width="1.5"/></svg><svg class="abs" style="left:180px;top:4px" width="32" height="10" viewBox="0 0 32 10"><path d="M3,0.5 L9,5 L3,9.5z M19,0.5 L25,5 L19,9.5z" fill="#777"/><path d="M26.5,0.5 v9" stroke="#777" stroke-width="1.4"/></svg><div class="abs" style="left:213px;top:1px;width:1px;height:16px;background:#3a3a3a"></div><span class="abs" style="left:294px;top:3.5px;font-size:10.5px;color:#c8c8c8;letter-spacing:-.47px">Selection</span><div class="abs" style="left:413.5px;top:1px;width:1px;height:16px;background:#3a3a3a"></div><svg class="abs" style="left:420px;top:4.5px" width="8" height="9" viewBox="0 0 8 9"><path d="M1,0.3 L7,4.5 L1,8.7z" fill="#d8d8d8"/></svg><div class="abs" style="left:431.5px;top:1px;width:570px;height:16px;background:#4a4a4a"></div><svg class="abs" style="left:437px;top:4px" width="7" height="10" viewBox="0 0 7 10"><path d="M5.5,1 L1.5,5 L5.5,9" fill="none" stroke="#8a8a8a" stroke-width="1.4"/></svg><svg class="abs" style="left:974px;top:4px" width="7" height="10" viewBox="0 0 7 10"><path d="M1.5,1 L5.5,5 L1.5,9" fill="none" stroke="#8a8a8a" stroke-width="1.4"/></svg><div class="abs" style="left:681.5px;top:2px;width:26px;height:13.5px;background:#636363;border-radius:6px"></div><div class="abs" style="left:986px;top:1px;width:16px;height:16px;background:#535353"></div></div><div id="panelb" class="abs"></div><div id="panel" class="abs"><div class="abs" style="left:0;top:0;width:361px;height:11px;background:#444"></div><div class="abs" style="left:0;top:11px;width:361px;height:1px;background:#3a3a3a"></div><svg class="abs" style="left:346.5px;top:3px" width="8" height="6" viewBox="0 0 8 6"><path d="M0.5,0.3 L3.3,3 L0.5,5.700z M4.300,0.300 L7.100,3 L4.300,5.700z" fill="#dcdcdc"/></svg><div class="abs" style="left:0;top:12.5px;width:361px;height:26.5px;background:#464646;border-bottom:1px solid #3d3d3d"></div><div class="abs" style="left:0px;top:12.5px;width:67px;height:25.5px;background:#464646;border-right:1px solid #3a3a3a;color:#b4b4b4;font-size:11px;-webkit-text-stroke:.35px;letter-spacing:-.27px;padding:7px 0 0 9px;white-space:nowrap">Properties</div><div class="abs" style="left:67px;top:12.5px;width:47px;height:27px;background:#535353;border-right:1px solid #3a3a3a;color:#f2f2f2;font-size:11px;-webkit-text-stroke:.35px;letter-spacing:-.27px;padding:7px 0 0 9px;white-space:nowrap">Layers</div><div class="abs" style="left:114px;top:12.5px;width:45px;height:25.5px;background:#464646;border-right:1px solid #3a3a3a;color:#b4b4b4;font-size:11px;-webkit-text-stroke:.35px;letter-spacing:-.27px;padding:7px 0 0 9px;white-space:nowrap">Color</div><div class="abs" style="left:159px;top:12.5px;width:75px;height:25.5px;background:#464646;border-right:1px solid #3a3a3a;color:#b4b4b4;font-size:11px;-webkit-text-stroke:.35px;letter-spacing:-.27px;padding:7px 0 0 9px;white-space:nowrap">Color Guide</div><svg class="abs" style="left:343px;top:20px" width="11" height="10" viewBox="0 0 11 10"><path d="M0,1.5 h11 M0,5 h11 M0,8.5 h11" stroke="#c8c8c8" stroke-width="1.3"/></svg><div class="abs" style="left:4.5px;top:44.5px;width:350px;height:774.5px;border:1px solid #474747;border-radius:2px;overflow:hidden"><div class="row" style="top:0px;"><svg class="abs" style="left:3.5px;top:5.5px" width="11.7" height="9" viewBox="0 0 13 10"><path d="M0.6,5 C2.5,1.6 5,0.9 6.5,0.9 C8,0.9 10.5,1.6 12.4,5 C10.5,8.4 8,9.1 6.5,9.1 C5,9.1 2.5,8.4 0.6,5Z" fill="#bebebe"/><circle cx="6.5" cy="5" r="2.9" fill="#535353"/><circle cx="6.5" cy="5" r="1.5" fill="#bebebe"/></svg><div class="abs" style="left:20px;top:0;width:1px;height:21px;background:#474747"></div><div class="abs" style="left:41px;top:0;width:1px;height:21px;background:#4b4b4b"></div><div class="abs" style="left:43.1px;top:1px;width:3.4px;height:18px;background:#4a7dff"></div><div class="abs" style="left:47px;top:0;width:1px;height:21px;background:#474747"></div><div class="abs" style="left:312.5px;top:0;width:1px;height:21px;background:#474747"></div><svg class="abs" style="left:53.5px;top:7.5px" width="10" height="6" viewBox="0 0 10 6"><path d="M1,1 L5.0,5.0 L9.0,1" fill="none" stroke="#dcdcdc" stroke-width="1.5"/></svg><div class="th" style="left:72px"><div class="abs" style="left:0;top:0;width:16px;height:16px;background:#eef6ea"></div><div class="abs" style="left:2px;top:4px;width:12px;height:8px;background:repeating-linear-gradient(90deg,#5a9fd8 0 1.5px,#cfe0f0 1.5px 3px)"></div><div class="abs" style="left:2px;top:7px;width:12px;height:1.5px;background:#8bc"></div></div><span class="nm" style="left:95px">Layer 1</span><div class="tg"></div><div class="sq"></div></div><div class="row" style="top:21px;"><svg class="abs" style="left:3.5px;top:5.5px" width="11.7" height="9" viewBox="0 0 13 10"><path d="M0.6,5 C2.5,1.6 5,0.9 6.5,0.9 C8,0.9 10.5,1.6 12.4,5 C10.5,8.4 8,9.1 6.5,9.1 C5,9.1 2.5,8.4 0.6,5Z" fill="#bebebe"/><circle cx="6.5" cy="5" r="2.9" fill="#535353"/><circle cx="6.5" cy="5" r="1.5" fill="#bebebe"/></svg><div class="abs" style="left:20px;top:0;width:1px;height:21px;background:#474747"></div><div class="abs" style="left:41px;top:0;width:1px;height:21px;background:#4b4b4b"></div><div class="abs" style="left:43.1px;top:1px;width:3.4px;height:18px;background:#4a7dff"></div><div class="abs" style="left:47px;top:0;width:1px;height:21px;background:#474747"></div><div class="abs" style="left:312.5px;top:0;width:1px;height:21px;background:#474747"></div><svg class="abs" style="left:76.5px;top:7.5px" width="10" height="6" viewBox="0 0 10 6"><path d="M1,1 L5.0,5.0 L9.0,1" fill="none" stroke="#dcdcdc" stroke-width="1.5"/></svg><div class="th" style="left:95px"><div class="abs" style="left:1px;top:4px;width:14px;height:9px;background:repeating-linear-gradient(90deg,#3f8fd0 0 1.6px,#e8eef6 1.6px 3.2px)"></div><div class="abs" style="left:1px;top:7.5px;width:14px;height:1.5px;background:#fff"></div><div class="abs" style="left:1px;top:14px;width:14px;height:1px;background:#bbb"></div></div><span class="nm" style="left:118px">conference</span><div class="tg"></div><div class="sq"></div></div><div class="row" style="top:42px;"><svg class="abs" style="left:3.5px;top:5.5px" width="11.7" height="9" viewBox="0 0 13 10"><path d="M0.6,5 C2.5,1.6 5,0.9 6.5,0.9 C8,0.9 10.5,1.6 12.4,5 C10.5,8.4 8,9.1 6.5,9.1 C5,9.1 2.5,8.4 0.6,5Z" fill="#bebebe"/><circle cx="6.5" cy="5" r="2.9" fill="#535353"/><circle cx="6.5" cy="5" r="1.5" fill="#bebebe"/></svg><div class="abs" style="left:20px;top:0;width:1px;height:21px;background:#474747"></div><div class="abs" style="left:41px;top:0;width:1px;height:21px;background:#4b4b4b"></div><div class="abs" style="left:43.1px;top:1px;width:3.4px;height:18px;background:#4a7dff"></div><div class="abs" style="left:47px;top:0;width:1px;height:21px;background:#474747"></div><div class="abs" style="left:312.5px;top:0;width:1px;height:21px;background:#474747"></div><div class="th" style="left:118px"><div class="abs" style="left:0;top:0;width:16px;height:2.5px;background:#111"></div><div class="abs" style="left:0;top:11.5px;width:16px;height:2px;background:#111"></div><div class="abs" style="left:0;top:0;width:1.5px;height:16px;background:#111"></div></div><span class="nm" style="left:141px">conference-area (viewport)</span><div class="tg"></div></div><div class="row" style="top:63px;"><svg class="abs" style="left:3.5px;top:5.5px" width="11.7" height="9" viewBox="0 0 13 10"><path d="M0.6,5 C2.5,1.6 5,0.9 6.5,0.9 C8,0.9 10.5,1.6 12.4,5 C10.5,8.4 8,9.1 6.5,9.1 C5,9.1 2.5,8.4 0.6,5Z" fill="#bebebe"/><circle cx="6.5" cy="5" r="2.9" fill="#535353"/><circle cx="6.5" cy="5" r="1.5" fill="#bebebe"/></svg><div class="abs" style="left:20px;top:0;width:1px;height:21px;background:#474747"></div><div class="abs" style="left:41px;top:0;width:1px;height:21px;background:#4b4b4b"></div><div class="abs" style="left:43.1px;top:1px;width:3.4px;height:18px;background:#4a7dff"></div><div class="abs" style="left:47px;top:0;width:1px;height:21px;background:#474747"></div><div class="abs" style="left:312.5px;top:0;width:1px;height:21px;background:#474747"></div><svg class="abs" style="left:100.0px;top:5.5px" width="6" height="9" viewBox="0 0 6 9"><path d="M1,1 L4.5,4.8 L1,8.5" fill="none" stroke="#dcdcdc" stroke-width="1.4"/></svg><div class="th" style="left:118px"></div><span class="nm" style="left:141px">banners</span><div class="tg"></div></div><div class="row" style="top:84px;"><svg class="abs" style="left:3.5px;top:5.5px" width="11.7" height="9" viewBox="0 0 13 10"><path d="M0.6,5 C2.5,1.6 5,0.9 6.5,0.9 C8,0.9 10.5,1.6 12.4,5 C10.5,8.4 8,9.1 6.5,9.1 C5,9.1 2.5,8.4 0.6,5Z" fill="#bebebe"/><circle cx="6.5" cy="5" r="2.9" fill="#535353"/><circle cx="6.5" cy="5" r="1.5" fill="#bebebe"/></svg><div class="abs" style="left:20px;top:0;width:1px;height:21px;background:#474747"></div><div class="abs" style="left:41px;top:0;width:1px;height:21px;background:#4b4b4b"></div><div class="abs" style="left:43.1px;top:1px;width:3.4px;height:18px;background:#4a7dff"></div><div class="abs" style="left:47px;top:0;width:1px;height:21px;background:#474747"></div><div class="abs" style="left:312.5px;top:0;width:1px;height:21px;background:#474747"></div><svg class="abs" style="left:99.5px;top:7.5px" width="10" height="6" viewBox="0 0 10 6"><path d="M1,1 L5.0,5.0 L9.0,1" fill="none" stroke="#dcdcdc" stroke-width="1.5"/></svg><div class="th" style="left:118px"><div class="abs" style="left:0;top:3px;width:16px;height:10px;background:repeating-linear-gradient(90deg,#3f8fd0 0 1.4px,#dfe8f4 1.4px 2.8px)"></div><div class="abs" style="left:0;top:6px;width:16px;height:1.2px;background:#e8eef6"></div><div class="abs" style="left:0;top:9.5px;width:16px;height:1.2px;background:#e8eef6"></div></div><span class="nm" style="left:141px">center tables</span><div class="tg"></div><div class="sq"></div></div><div class="row" style="top:105px;"><svg class="abs" style="left:3.5px;top:5.5px" width="11.7" height="9" viewBox="0 0 13 10"><path d="M0.6,5 C2.5,1.6 5,0.9 6.5,0.9 C8,0.9 10.5,1.6 12.4,5 C10.5,8.4 8,9.1 6.5,9.1 C5,9.1 2.5,8.4 0.6,5Z" fill="#bebebe"/><circle cx="6.5" cy="5" r="2.9" fill="#535353"/><circle cx="6.5" cy="5" r="1.5" fill="#bebebe"/></svg><div class="abs" style="left:20px;top:0;width:1px;height:21px;background:#474747"></div><div class="abs" style="left:41px;top:0;width:1px;height:21px;background:#4b4b4b"></div><div class="abs" style="left:43.1px;top:1px;width:3.4px;height:18px;background:#4a7dff"></div><div class="abs" style="left:47px;top:0;width:1px;height:21px;background:#474747"></div><div class="abs" style="left:312.5px;top:0;width:1px;height:21px;background:#474747"></div><svg class="abs" style="left:122.5px;top:7.5px" width="10" height="6" viewBox="0 0 10 6"><path d="M1,1 L5.0,5.0 L9.0,1" fill="none" stroke="#dcdcdc" stroke-width="1.5"/></svg><div class="th" style="left:141px"><svg class="abs" style="left:0;top:0" width="16" height="16" viewBox="0 0 16 16"><rect x="1" y="0" width="14" height="16" fill="#e6e8f0"/><circle cx="8" cy="7" r="4.6" fill="none" stroke="#2f8cdb" stroke-width="2.800" stroke-dasharray="3.800,3.426" stroke-dashoffset="1.900"/><circle cx="8" cy="7" r="3.300" fill="#f4f4f8"/><rect x="1" y="0.500" width="3.800" height="3.800" rx="1" fill="#2f8cdb" transform="rotate(45 2.900 2.400)"/><rect x="11.200" y="9" width="3.800" height="3.800" rx="1" fill="#2f8cdb" transform="rotate(45 13.100 10.900)"/><rect x="7" y="5.500" width="2" height="2.500" fill="#8a84a0"/><rect x="5" y="14" width="6" height="1.500" fill="#333"/></svg></div><span class="nm" style="left:164px">table-Table 1</span><div class="tg"></div><div class="sq"></div></div><div class="row" style="top:126px;"><svg class="abs" style="left:3.5px;top:5.5px" width="11.7" height="9" viewBox="0 0 13 10"><path d="M0.6,5 C2.5,1.6 5,0.9 6.5,0.9 C8,0.9 10.5,1.6 12.4,5 C10.5,8.4 8,9.1 6.5,9.1 C5,9.1 2.5,8.4 0.6,5Z" fill="#bebebe"/><circle cx="6.5" cy="5" r="2.9" fill="#535353"/><circle cx="6.5" cy="5" r="1.5" fill="#bebebe"/></svg><div class="abs" style="left:20px;top:0;width:1px;height:21px;background:#474747"></div><div class="abs" style="left:41px;top:0;width:1px;height:21px;background:#4b4b4b"></div><div class="abs" style="left:43.1px;top:1px;width:3.4px;height:18px;background:#4a7dff"></div><div class="abs" style="left:47px;top:0;width:1px;height:21px;background:#474747"></div><div class="abs" style="left:312.5px;top:0;width:1px;height:21px;background:#474747"></div><svg class="abs" style="left:146.0px;top:5.5px" width="6" height="9" viewBox="0 0 6 9"><path d="M1,1 L4.5,4.8 L1,8.5" fill="none" stroke="#dcdcdc" stroke-width="1.4"/></svg><div class="th" style="left:164px"></div><span class="nm" style="left:187px">admin-seat</span><div class="tg"></div></div><div class="row" style="top:147px;"><svg class="abs" style="left:3.5px;top:5.5px" width="11.7" height="9" viewBox="0 0 13 10"><path d="M0.6,5 C2.5,1.6 5,0.9 6.5,0.9 C8,0.9 10.5,1.6 12.4,5 C10.5,8.4 8,9.1 6.5,9.1 C5,9.1 2.5,8.4 0.6,5Z" fill="#bebebe"/><circle cx="6.5" cy="5" r="2.9" fill="#535353"/><circle cx="6.5" cy="5" r="1.5" fill="#bebebe"/></svg><div class="abs" style="left:20px;top:0;width:1px;height:21px;background:#474747"></div><div class="abs" style="left:41px;top:0;width:1px;height:21px;background:#4b4b4b"></div><div class="abs" style="left:43.1px;top:1px;width:3.4px;height:18px;background:#4a7dff"></div><div class="abs" style="left:47px;top:0;width:1px;height:21px;background:#474747"></div><div class="abs" style="left:312.5px;top:0;width:1px;height:21px;background:#474747"></div><div class="th" style="left:164px"><div class="abs" style="left:0.5px;top:6.5px;width:15px;height:3px;background:repeating-linear-gradient(90deg,#111 0 1.3px,#fff 1.3px 2px,#333 2px 3px,#fff 3px 3.6px)"></div></div><span class="nm" style="left:187px">name</span><div class="tg"></div></div><div class="row" style="top:168px;"><svg class="abs" style="left:3.5px;top:5.5px" width="11.7" height="9" viewBox="0 0 13 10"><path d="M0.6,5 C2.5,1.6 5,0.9 6.5,0.9 C8,0.9 10.5,1.6 12.4,5 C10.5,8.4 8,9.1 6.5,9.1 C5,9.1 2.5,8.4 0.6,5Z" fill="#bebebe"/><circle cx="6.5" cy="5" r="2.9" fill="#535353"/><circle cx="6.5" cy="5" r="1.5" fill="#bebebe"/></svg><div class="abs" style="left:20px;top:0;width:1px;height:21px;background:#474747"></div><div class="abs" style="left:41px;top:0;width:1px;height:21px;background:#4b4b4b"></div><div class="abs" style="left:43.1px;top:1px;width:3.4px;height:18px;background:#4a7dff"></div><div class="abs" style="left:47px;top:0;width:1px;height:21px;background:#474747"></div><div class="abs" style="left:312.5px;top:0;width:1px;height:21px;background:#474747"></div><svg class="abs" style="left:145.5px;top:7.5px" width="10" height="6" viewBox="0 0 10 6"><path d="M1,1 L5.0,5.0 L9.0,1" fill="none" stroke="#dcdcdc" stroke-width="1.5"/></svg><div class="th" style="left:164px"><div class="abs" style="left:6px;top:1px;width:4.5px;height:3.5px;background:#3394d8"></div><div class="abs" style="left:6px;top:11.5px;width:4.5px;height:3.5px;background:#3394d8"></div><div class="abs" style="left:1px;top:5.5px;width:3.5px;height:5px;background:#3394d8"></div><div class="abs" style="left:11.5px;top:5.5px;width:3.5px;height:5px;background:#3394d8"></div><div class="abs" style="left:5px;top:4.5px;width:6px;height:7px;border-radius:50%;background:#e9ebf3"></div><div class="abs" style="left:7.5px;top:7px;width:1.5px;height:2.5px;background:#665"></div></div><span class="nm" style="left:187px">group of seats</span><div class="abs" style="left:317px;top:4.5px;width:12px;height:12px;border:1.1px solid #d8d8d8;border-radius:50%"></div><div class="abs" style="left:319.5px;top:7px;width:7px;height:7px;border:1.1px solid #d8d8d8;border-radius:50%"></div><div class="sqb"></div></div><div class="row" style="top:189px;"><svg class="abs" style="left:3.5px;top:5.5px" width="11.7" height="9" viewBox="0 0 13 10"><path d="M0.6,5 C2.5,1.6 5,0.9 6.5,0.9 C8,0.9 10.5,1.6 12.4,5 C10.5,8.4 8,9.1 6.5,9.1 C5,9.1 2.5,8.4 0.6,5Z" fill="#bebebe"/><circle cx="6.5" cy="5" r="2.9" fill="#535353"/><circle cx="6.5" cy="5" r="1.5" fill="#bebebe"/></svg><div class="abs" style="left:20px;top:0;width:1px;height:21px;background:#474747"></div><div class="abs" style="left:41px;top:0;width:1px;height:21px;background:#4b4b4b"></div><div class="abs" style="left:43.1px;top:1px;width:3.4px;height:18px;background:#4a7dff"></div><div class="abs" style="left:47px;top:0;width:1px;height:21px;background:#474747"></div><div class="abs" style="left:312.5px;top:0;width:1px;height:21px;background:#474747"></div><svg class="abs" style="left:169.0px;top:5.5px" width="6" height="9" viewBox="0 0 6 9"><path d="M1,1 L4.5,4.8 L1,8.5" fill="none" stroke="#dcdcdc" stroke-width="1.4"/></svg><div class="th" style="left:187px"><div class="abs" style="left:1px;top:1px;width:14px;height:14px;border-radius:50%;background:#eceef4"></div><div class="abs" style="left:6px;top:3.5px;width:5px;height:3px;background:#7a7394"></div><div class="abs" style="left:6.5px;top:9px;width:3px;height:3.5px;background:#5a5272"></div><div class="abs" style="left:3px;top:7px;width:2px;height:2px;border-radius:50%;background:#cde"></div></div><span class="nm" style="left:210px">circle/table</span><div class="tg"></div><div class="sqb"></div></div><div class="row" style="top:210px;"><svg class="abs" style="left:3.5px;top:5.5px" width="11.7" height="9" viewBox="0 0 13 10"><path d="M0.6,5 C2.5,1.6 5,0.9 6.5,0.9 C8,0.9 10.5,1.6 12.4,5 C10.5,8.4 8,9.1 6.5,9.1 C5,9.1 2.5,8.4 0.6,5Z" fill="#bebebe"/><circle cx="6.5" cy="5" r="2.9" fill="#535353"/><circle cx="6.5" cy="5" r="1.5" fill="#bebebe"/></svg><div class="abs" style="left:20px;top:0;width:1px;height:21px;background:#474747"></div><div class="abs" style="left:41px;top:0;width:1px;height:21px;background:#4b4b4b"></div><div class="abs" style="left:43.1px;top:1px;width:3.4px;height:18px;background:#4a7dff"></div><div class="abs" style="left:47px;top:0;width:1px;height:21px;background:#474747"></div><div class="abs" style="left:312.5px;top:0;width:1px;height:21px;background:#474747"></div><svg class="abs" style="left:169.0px;top:5.5px" width="6" height="9" viewBox="0 0 6 9"><path d="M1,1 L4.5,4.8 L1,8.5" fill="none" stroke="#dcdcdc" stroke-width="1.4"/></svg><div class="th" style="left:187px"><div class="abs" style="left:1px;top:3px;width:14px;height:10px;background:#3394d8"></div><div class="abs" style="left:3px;top:1.5px;width:10px;height:13px;background:#3394d8;border-radius:1px"></div><div class="abs" style="left:3px;top:4.5px;width:10px;height:7px;background:#2a7fba"></div></div><span class="nm" style="left:210px">seat</span><div class="tg"></div><div class="sqb"></div></div><div class="row" style="top:231px;"><svg class="abs" style="left:3.5px;top:5.5px" width="11.7" height="9" viewBox="0 0 13 10"><path d="M0.6,5 C2.5,1.6 5,0.9 6.5,0.9 C8,0.9 10.5,1.6 12.4,5 C10.5,8.4 8,9.1 6.5,9.1 C5,9.1 2.5,8.4 0.6,5Z" fill="#bebebe"/><circle cx="6.5" cy="5" r="2.9" fill="#535353"/><circle cx="6.5" cy="5" r="1.5" fill="#bebebe"/></svg><div class="abs" style="left:20px;top:0;width:1px;height:21px;background:#474747"></div><div class="abs" style="left:41px;top:0;width:1px;height:21px;background:#4b4b4b"></div><div class="abs" style="left:43.1px;top:1px;width:3.4px;height:18px;background:#4a7dff"></div><div class="abs" style="left:47px;top:0;width:1px;height:21px;background:#474747"></div><div class="abs" style="left:312.5px;top:0;width:1px;height:21px;background:#474747"></div><svg class="abs" style="left:169.0px;top:5.5px" width="6" height="9" viewBox="0 0 6 9"><path d="M1,1 L4.5,4.8 L1,8.5" fill="none" stroke="#dcdcdc" stroke-width="1.4"/></svg><div class="th" style="left:187px"><div class="abs" style="left:3px;top:1px;width:10px;height:14px;background:#3394d8"></div><div class="abs" style="left:1.5px;top:3px;width:13px;height:10px;background:#3394d8;border-radius:1px"></div><div class="abs" style="left:4.5px;top:3px;width:7px;height:10px;background:#2a7fba"></div></div><span class="nm" style="left:210px">seat</span><div class="tg"></div><div class="sqb"></div></div><div class="row" style="top:252px;"><svg class="abs" style="left:3.5px;top:5.5px" width="11.7" height="9" viewBox="0 0 13 10"><path d="M0.6,5 C2.5,1.6 5,0.9 6.5,0.9 C8,0.9 10.5,1.6 12.4,5 C10.5,8.4 8,9.1 6.5,9.1 C5,9.1 2.5,8.4 0.6,5Z" fill="#bebebe"/><circle cx="6.5" cy="5" r="2.9" fill="#535353"/><circle cx="6.5" cy="5" r="1.5" fill="#bebebe"/></svg><div class="abs" style="left:20px;top:0;width:1px;height:21px;background:#474747"></div><div class="abs" style="left:41px;top:0;width:1px;height:21px;background:#4b4b4b"></div><div class="abs" style="left:43.1px;top:1px;width:3.4px;height:18px;background:#4a7dff"></div><div class="abs" style="left:47px;top:0;width:1px;height:21px;background:#474747"></div><div class="abs" style="left:312.5px;top:0;width:1px;height:21px;background:#474747"></div><svg class="abs" style="left:169.0px;top:5.5px" width="6" height="9" viewBox="0 0 6 9"><path d="M1,1 L4.5,4.8 L1,8.5" fill="none" stroke="#dcdcdc" stroke-width="1.4"/></svg><div class="th" style="left:187px"><div class="abs" style="left:3px;top:1px;width:10px;height:14px;background:#3394d8"></div><div class="abs" style="left:1.5px;top:3px;width:13px;height:10px;background:#3394d8;border-radius:1px"></div><div class="abs" style="left:4.5px;top:3px;width:7px;height:10px;background:#2a7fba"></div></div><span class="nm" style="left:210px">seat</span><div class="tg"></div><div class="sqb"></div></div><div class="row" style="top:273px;"><svg class="abs" style="left:3.5px;top:5.5px" width="11.7" height="9" viewBox="0 0 13 10"><path d="M0.6,5 C2.5,1.6 5,0.9 6.5,0.9 C8,0.9 10.5,1.6 12.4,5 C10.5,8.4 8,9.1 6.5,9.1 C5,9.1 2.5,8.4 0.6,5Z" fill="#bebebe"/><circle cx="6.5" cy="5" r="2.9" fill="#535353"/><circle cx="6.5" cy="5" r="1.5" fill="#bebebe"/></svg><div class="abs" style="left:20px;top:0;width:1px;height:21px;background:#474747"></div><div class="abs" style="left:41px;top:0;width:1px;height:21px;background:#4b4b4b"></div><div class="abs" style="left:43.1px;top:1px;width:3.4px;height:18px;background:#4a7dff"></div><div class="abs" style="left:47px;top:0;width:1px;height:21px;background:#474747"></div><div class="abs" style="left:312.5px;top:0;width:1px;height:21px;background:#474747"></div><svg class="abs" style="left:169.0px;top:5.5px" width="6" height="9" viewBox="0 0 6 9"><path d="M1,1 L4.5,4.8 L1,8.5" fill="none" stroke="#dcdcdc" stroke-width="1.4"/></svg><div class="th" style="left:187px"><div class="abs" style="left:1px;top:3px;width:14px;height:10px;background:#3394d8"></div><div class="abs" style="left:3px;top:1.5px;width:10px;height:13px;background:#3394d8;border-radius:1px"></div><div class="abs" style="left:3px;top:4.5px;width:10px;height:7px;background:#2a7fba"></div></div><span class="nm" style="left:210px">seat</span><div class="tg"></div><div class="sqb"></div></div><div class="row" style="top:294px;background:#4e6482;"><span class="abs" style="left:21.5px;top:2.0px;font-size:13.5px;font-weight:bold;color:#f4f400;letter-spacing:0;z-index:3">hide</span><div class="abs" style="left:20px;top:0;width:1px;height:21px;background:#474747"></div><div class="abs" style="left:41px;top:0;width:1px;height:21px;background:#4b4b4b"></div><div class="abs" style="left:43.1px;top:1px;width:3.4px;height:18px;background:#4a7dff"></div><div class="abs" style="left:47px;top:0;width:1px;height:21px;background:#474747"></div><div class="abs" style="left:312.5px;top:0;width:1px;height:21px;background:#474747"></div><svg class="abs" style="left:169.0px;top:5.5px" width="6" height="9" viewBox="0 0 6 9"><path d="M1,1 L4.5,4.8 L1,8.5" fill="none" stroke="#dcdcdc" stroke-width="1.4"/></svg><div class="th" style="left:187px"><div class="abs" style="left:2.5px;top:3.5px;width:11px;height:9px;background:#3394d8;transform:rotate(-45deg);border-radius:1px"></div><div class="abs" style="left:4.5px;top:2.5px;width:7px;height:11px;background:#3394d8;transform:rotate(-45deg)"></div></div><span class="nm" style="left:210px">seat</span><div class="tg"></div><div class="sqb"></div></div><div class="row" style="top:315px;"><span class="abs" style="left:22.5px;top:0.8px;font-size:13.5px;font-weight:bold;color:#f4f400;letter-spacing:0;z-index:3">hide</span><div class="abs" style="left:20px;top:0;width:1px;height:21px;background:#474747"></div><div class="abs" style="left:41px;top:0;width:1px;height:21px;background:#4b4b4b"></div><div class="abs" style="left:43.1px;top:1px;width:3.4px;height:18px;background:#4a7dff"></div><div class="abs" style="left:47px;top:0;width:1px;height:21px;background:#474747"></div><div class="abs" style="left:312.5px;top:0;width:1px;height:21px;background:#474747"></div><svg class="abs" style="left:169.0px;top:5.5px" width="6" height="9" viewBox="0 0 6 9"><path d="M1,1 L4.5,4.8 L1,8.5" fill="none" stroke="#dcdcdc" stroke-width="1.4"/></svg><div class="th" style="left:187px"><div class="abs" style="left:2.5px;top:3.5px;width:11px;height:9px;background:#3394d8;transform:rotate(-45deg);border-radius:1px"></div><div class="abs" style="left:4.5px;top:2.5px;width:7px;height:11px;background:#3394d8;transform:rotate(-45deg)"></div></div><span class="nm" style="left:210px">seat</span><div class="tg"></div><div class="sqb"></div></div><div class="row" style="top:336px;"><svg class="abs" style="left:3.5px;top:5.5px" width="11.7" height="9" viewBox="0 0 13 10"><path d="M0.6,5 C2.5,1.6 5,0.9 6.5,0.9 C8,0.9 10.5,1.6 12.4,5 C10.5,8.4 8,9.1 6.5,9.1 C5,9.1 2.5,8.4 0.6,5Z" fill="#bebebe"/><circle cx="6.5" cy="5" r="2.9" fill="#535353"/><circle cx="6.5" cy="5" r="1.5" fill="#bebebe"/></svg><div class="abs" style="left:20px;top:0;width:1px;height:21px;background:#474747"></div><div class="abs" style="left:41px;top:0;width:1px;height:21px;background:#4b4b4b"></div><div class="abs" style="left:43.1px;top:1px;width:3.4px;height:18px;background:#4a7dff"></div><div class="abs" style="left:47px;top:0;width:1px;height:21px;background:#474747"></div><div class="abs" style="left:312.5px;top:0;width:1px;height:21px;background:#474747"></div><div class="th" style="left:164px"><div class="abs" style="left:0;top:0;width:16px;height:16px;background:linear-gradient(135deg,#fff 0 18%,#5e5672 30%,#b8b4c4 55%,#fff 75%)"></div><div class="abs" style="left:0;top:0;width:3px;height:16px;background:#fff"></div><div class="abs" style="left:0;top:11px;width:16px;height:5px;background:#fff"></div></div><span class="nm" style="left:187px">shadow</span><div class="tg"></div></div><div class="row" style="top:357px;"><svg class="abs" style="left:3.5px;top:5.5px" width="11.7" height="9" viewBox="0 0 13 10"><path d="M0.6,5 C2.5,1.6 5,0.9 6.5,0.9 C8,0.9 10.5,1.6 12.4,5 C10.5,8.4 8,9.1 6.5,9.1 C5,9.1 2.5,8.4 0.6,5Z" fill="#bebebe"/><circle cx="6.5" cy="5" r="2.9" fill="#535353"/><circle cx="6.5" cy="5" r="1.5" fill="#bebebe"/></svg><div class="abs" style="left:20px;top:0;width:1px;height:21px;background:#474747"></div><div class="abs" style="left:41px;top:0;width:1px;height:21px;background:#4b4b4b"></div><div class="abs" style="left:43.1px;top:1px;width:3.4px;height:18px;background:#4a7dff"></div><div class="abs" style="left:47px;top:0;width:1px;height:21px;background:#474747"></div><div class="abs" style="left:312.5px;top:0;width:1px;height:21px;background:#474747"></div><svg class="abs" style="left:146.0px;top:5.5px" width="6" height="9" viewBox="0 0 6 9"><path d="M1,1 L4.5,4.8 L1,8.5" fill="none" stroke="#dcdcdc" stroke-width="1.4"/></svg><div class="th" style="left:164px"><div class="abs" style="left:1.5px;top:1.5px;width:13px;height:13px;background:#c3cbdf"></div></div><span class="nm" style="left:187px">rug</span><div class="tg"></div></div><div class="row" style="top:378px;"><svg class="abs" style="left:3.5px;top:5.5px" width="11.7" height="9" viewBox="0 0 13 10"><path d="M0.6,5 C2.5,1.6 5,0.9 6.5,0.9 C8,0.9 10.5,1.6 12.4,5 C10.5,8.4 8,9.1 6.5,9.1 C5,9.1 2.5,8.4 0.6,5Z" fill="#bebebe"/><circle cx="6.5" cy="5" r="2.9" fill="#535353"/><circle cx="6.5" cy="5" r="1.5" fill="#bebebe"/></svg><div class="abs" style="left:20px;top:0;width:1px;height:21px;background:#474747"></div><div class="abs" style="left:41px;top:0;width:1px;height:21px;background:#4b4b4b"></div><div class="abs" style="left:43.1px;top:1px;width:3.4px;height:18px;background:#4a7dff"></div><div class="abs" style="left:47px;top:0;width:1px;height:21px;background:#474747"></div><div class="abs" style="left:312.5px;top:0;width:1px;height:21px;background:#474747"></div><svg class="abs" style="left:123.0px;top:5.5px" width="6" height="9" viewBox="0 0 6 9"><path d="M1,1 L4.5,4.8 L1,8.5" fill="none" stroke="#dcdcdc" stroke-width="1.4"/></svg><div class="th" style="left:141px"><svg class="abs" style="left:0;top:0" width="16" height="16" viewBox="0 0 16 16"><rect x="1" y="0" width="14" height="16" fill="#e6e8f0"/><circle cx="8" cy="7" r="4.6" fill="none" stroke="#2f8cdb" stroke-width="2.800" stroke-dasharray="3.800,3.426" stroke-dashoffset="1.900"/><circle cx="8" cy="7" r="3.300" fill="#f4f4f8"/><rect x="1" y="0.500" width="3.800" height="3.800" rx="1" fill="#2f8cdb" transform="rotate(45 2.900 2.400)"/><rect x="11.200" y="9" width="3.800" height="3.800" rx="1" fill="#2f8cdb" transform="rotate(45 13.100 10.900)"/><rect x="7" y="5.500" width="2" height="2.500" fill="#8a84a0"/><rect x="5" y="14" width="6" height="1.500" fill="#333"/></svg></div><span class="nm" style="left:164px">table-Table 2</span><div class="tg"></div></div><div class="row" style="top:399px;"><svg class="abs" style="left:3.5px;top:5.5px" width="11.7" height="9" viewBox="0 0 13 10"><path d="M0.6,5 C2.5,1.6 5,0.9 6.5,0.9 C8,0.9 10.5,1.6 12.4,5 C10.5,8.4 8,9.1 6.5,9.1 C5,9.1 2.5,8.4 0.6,5Z" fill="#bebebe"/><circle cx="6.5" cy="5" r="2.9" fill="#535353"/><circle cx="6.5" cy="5" r="1.5" fill="#bebebe"/></svg><div class="abs" style="left:20px;top:0;width:1px;height:21px;background:#474747"></div><div class="abs" style="left:41px;top:0;width:1px;height:21px;background:#4b4b4b"></div><div class="abs" style="left:43.1px;top:1px;width:3.4px;height:18px;background:#4a7dff"></div><div class="abs" style="left:47px;top:0;width:1px;height:21px;background:#474747"></div><div class="abs" style="left:312.5px;top:0;width:1px;height:21px;background:#474747"></div><svg class="abs" style="left:123.0px;top:5.5px" width="6" height="9" viewBox="0 0 6 9"><path d="M1,1 L4.5,4.8 L1,8.5" fill="none" stroke="#dcdcdc" stroke-width="1.4"/></svg><div class="th" style="left:141px"><svg class="abs" style="left:0;top:0" width="16" height="16" viewBox="0 0 16 16"><rect x="1" y="0" width="14" height="16" fill="#e6e8f0"/><circle cx="8" cy="7" r="4.6" fill="none" stroke="#2f8cdb" stroke-width="2.800" stroke-dasharray="3.800,3.426" stroke-dashoffset="1.900"/><circle cx="8" cy="7" r="3.300" fill="#f4f4f8"/><rect x="1" y="0.500" width="3.800" height="3.800" rx="1" fill="#2f8cdb" transform="rotate(45 2.900 2.400)"/><rect x="11.200" y="9" width="3.800" height="3.800" rx="1" fill="#2f8cdb" transform="rotate(45 13.100 10.900)"/><rect x="7" y="5.500" width="2" height="2.500" fill="#8a84a0"/><rect x="5" y="14" width="6" height="1.500" fill="#333"/></svg></div><span class="nm" style="left:164px">table-Table 3</span><div class="tg"></div></div><div class="row" style="top:420px;"><svg class="abs" style="left:3.5px;top:5.5px" width="11.7" height="9" viewBox="0 0 13 10"><path d="M0.6,5 C2.5,1.6 5,0.9 6.5,0.9 C8,0.9 10.5,1.6 12.4,5 C10.5,8.4 8,9.1 6.5,9.1 C5,9.1 2.5,8.4 0.6,5Z" fill="#bebebe"/><circle cx="6.5" cy="5" r="2.9" fill="#535353"/><circle cx="6.5" cy="5" r="1.5" fill="#bebebe"/></svg><div class="abs" style="left:20px;top:0;width:1px;height:21px;background:#474747"></div><div class="abs" style="left:41px;top:0;width:1px;height:21px;background:#4b4b4b"></div><div class="abs" style="left:43.1px;top:1px;width:3.4px;height:18px;background:#4a7dff"></div><div class="abs" style="left:47px;top:0;width:1px;height:21px;background:#474747"></div><div class="abs" style="left:312.5px;top:0;width:1px;height:21px;background:#474747"></div><svg class="abs" style="left:123.0px;top:5.5px" width="6" height="9" viewBox="0 0 6 9"><path d="M1,1 L4.5,4.8 L1,8.5" fill="none" stroke="#dcdcdc" stroke-width="1.4"/></svg><div class="th" style="left:141px"><svg class="abs" style="left:0;top:0" width="16" height="16" viewBox="0 0 16 16"><rect x="1" y="0" width="14" height="16" fill="#e6e8f0"/><circle cx="8" cy="7" r="4.6" fill="none" stroke="#2f8cdb" stroke-width="2.800" stroke-dasharray="3.800,3.426" stroke-dashoffset="1.900"/><circle cx="8" cy="7" r="3.300" fill="#f4f4f8"/><rect x="1" y="0.500" width="3.800" height="3.800" rx="1" fill="#2f8cdb" transform="rotate(45 2.900 2.400)"/><rect x="11.200" y="9" width="3.800" height="3.800" rx="1" fill="#2f8cdb" transform="rotate(45 13.100 10.900)"/><rect x="7" y="5.500" width="2" height="2.500" fill="#8a84a0"/><rect x="5" y="14" width="6" height="1.500" fill="#333"/></svg></div><span class="nm" style="left:164px">table-Table 4</span><div class="tg"></div></div><div class="row" style="top:441px;"><svg class="abs" style="left:3.5px;top:5.5px" width="11.7" height="9" viewBox="0 0 13 10"><path d="M0.6,5 C2.5,1.6 5,0.9 6.5,0.9 C8,0.9 10.5,1.6 12.4,5 C10.5,8.4 8,9.1 6.5,9.1 C5,9.1 2.5,8.4 0.6,5Z" fill="#bebebe"/><circle cx="6.5" cy="5" r="2.9" fill="#535353"/><circle cx="6.5" cy="5" r="1.5" fill="#bebebe"/></svg><div class="abs" style="left:20px;top:0;width:1px;height:21px;background:#474747"></div><div class="abs" style="left:41px;top:0;width:1px;height:21px;background:#4b4b4b"></div><div class="abs" style="left:43.1px;top:1px;width:3.4px;height:18px;background:#4a7dff"></div><div class="abs" style="left:47px;top:0;width:1px;height:21px;background:#474747"></div><div class="abs" style="left:312.5px;top:0;width:1px;height:21px;background:#474747"></div><svg class="abs" style="left:123.0px;top:5.5px" width="6" height="9" viewBox="0 0 6 9"><path d="M1,1 L4.5,4.8 L1,8.5" fill="none" stroke="#dcdcdc" stroke-width="1.4"/></svg><div class="th" style="left:141px"><svg class="abs" style="left:0;top:0" width="16" height="16" viewBox="0 0 16 16"><rect x="1" y="0" width="14" height="16" fill="#e6e8f0"/><circle cx="8" cy="7" r="4.6" fill="none" stroke="#2f8cdb" stroke-width="2.800" stroke-dasharray="3.800,3.426" stroke-dashoffset="1.900"/><circle cx="8" cy="7" r="3.300" fill="#f4f4f8"/><rect x="1" y="0.500" width="3.800" height="3.800" rx="1" fill="#2f8cdb" transform="rotate(45 2.900 2.400)"/><rect x="11.200" y="9" width="3.800" height="3.800" rx="1" fill="#2f8cdb" transform="rotate(45 13.100 10.900)"/><rect x="7" y="5.500" width="2" height="2.500" fill="#8a84a0"/><rect x="5" y="14" width="6" height="1.500" fill="#333"/></svg></div><span class="nm" style="left:164px">table-Table 5</span><div class="tg"></div></div><div class="row" style="top:462px;"><svg class="abs" style="left:3.5px;top:5.5px" width="11.7" height="9" viewBox="0 0 13 10"><path d="M0.6,5 C2.5,1.6 5,0.9 6.5,0.9 C8,0.9 10.5,1.6 12.4,5 C10.5,8.4 8,9.1 6.5,9.1 C5,9.1 2.5,8.4 0.6,5Z" fill="#bebebe"/><circle cx="6.5" cy="5" r="2.9" fill="#535353"/><circle cx="6.5" cy="5" r="1.5" fill="#bebebe"/></svg><div class="abs" style="left:20px;top:0;width:1px;height:21px;background:#474747"></div><div class="abs" style="left:41px;top:0;width:1px;height:21px;background:#4b4b4b"></div><div class="abs" style="left:43.1px;top:1px;width:3.4px;height:18px;background:#4a7dff"></div><div class="abs" style="left:47px;top:0;width:1px;height:21px;background:#474747"></div><div class="abs" style="left:312.5px;top:0;width:1px;height:21px;background:#474747"></div><svg class="abs" style="left:123.0px;top:5.5px" width="6" height="9" viewBox="0 0 6 9"><path d="M1,1 L4.5,4.8 L1,8.5" fill="none" stroke="#dcdcdc" stroke-width="1.4"/></svg><div class="th" style="left:141px"><svg class="abs" style="left:0;top:0" width="16" height="16" viewBox="0 0 16 16"><rect x="1" y="0" width="14" height="16" fill="#e6e8f0"/><circle cx="8" cy="7" r="4.6" fill="none" stroke="#2f8cdb" stroke-width="2.800" stroke-dasharray="3.800,3.426" stroke-dashoffset="1.900"/><circle cx="8" cy="7" r="3.300" fill="#f4f4f8"/><rect x="1" y="0.500" width="3.800" height="3.800" rx="1" fill="#2f8cdb" transform="rotate(45 2.900 2.400)"/><rect x="11.200" y="9" width="3.800" height="3.800" rx="1" fill="#2f8cdb" transform="rotate(45 13.100 10.900)"/><rect x="7" y="5.500" width="2" height="2.500" fill="#8a84a0"/><rect x="5" y="14" width="6" height="1.500" fill="#333"/></svg></div><span class="nm" style="left:164px">table-Table 6</span><div class="tg"></div></div><div class="row" style="top:483px;"><svg class="abs" style="left:3.5px;top:5.5px" width="11.7" height="9" viewBox="0 0 13 10"><path d="M0.6,5 C2.5,1.6 5,0.9 6.5,0.9 C8,0.9 10.5,1.6 12.4,5 C10.5,8.4 8,9.1 6.5,9.1 C5,9.1 2.5,8.4 0.6,5Z" fill="#bebebe"/><circle cx="6.5" cy="5" r="2.9" fill="#535353"/><circle cx="6.5" cy="5" r="1.5" fill="#bebebe"/></svg><div class="abs" style="left:20px;top:0;width:1px;height:21px;background:#474747"></div><div class="abs" style="left:41px;top:0;width:1px;height:21px;background:#4b4b4b"></div><div class="abs" style="left:43.1px;top:1px;width:3.4px;height:18px;background:#4a7dff"></div><div class="abs" style="left:47px;top:0;width:1px;height:21px;background:#474747"></div><div class="abs" style="left:312.5px;top:0;width:1px;height:21px;background:#474747"></div><svg class="abs" style="left:123.0px;top:5.5px" width="6" height="9" viewBox="0 0 6 9"><path d="M1,1 L4.5,4.8 L1,8.5" fill="none" stroke="#dcdcdc" stroke-width="1.4"/></svg><div class="th" style="left:141px"><svg class="abs" style="left:0;top:0" width="16" height="16" viewBox="0 0 16 16"><rect x="1" y="0" width="14" height="16" fill="#e6e8f0"/><circle cx="8" cy="7" r="4.6" fill="none" stroke="#2f8cdb" stroke-width="2.800" stroke-dasharray="3.800,3.426" stroke-dashoffset="1.900"/><circle cx="8" cy="7" r="3.300" fill="#f4f4f8"/><rect x="1" y="0.500" width="3.800" height="3.800" rx="1" fill="#2f8cdb" transform="rotate(45 2.900 2.400)"/><rect x="11.200" y="9" width="3.800" height="3.800" rx="1" fill="#2f8cdb" transform="rotate(45 13.100 10.900)"/><rect x="7" y="5.500" width="2" height="2.500" fill="#8a84a0"/><rect x="5" y="14" width="6" height="1.500" fill="#333"/></svg></div><span class="nm" style="left:164px">table-Table 7</span><div class="tg"></div></div><div class="row" style="top:504px;"><svg class="abs" style="left:3.5px;top:5.5px" width="11.7" height="9" viewBox="0 0 13 10"><path d="M0.6,5 C2.5,1.6 5,0.9 6.5,0.9 C8,0.9 10.5,1.6 12.4,5 C10.5,8.4 8,9.1 6.5,9.1 C5,9.1 2.5,8.4 0.6,5Z" fill="#bebebe"/><circle cx="6.5" cy="5" r="2.9" fill="#535353"/><circle cx="6.5" cy="5" r="1.5" fill="#bebebe"/></svg><div class="abs" style="left:20px;top:0;width:1px;height:21px;background:#474747"></div><div class="abs" style="left:41px;top:0;width:1px;height:21px;background:#4b4b4b"></div><div class="abs" style="left:43.1px;top:1px;width:3.4px;height:18px;background:#4a7dff"></div><div class="abs" style="left:47px;top:0;width:1px;height:21px;background:#474747"></div><div class="abs" style="left:312.5px;top:0;width:1px;height:21px;background:#474747"></div><svg class="abs" style="left:123.0px;top:5.5px" width="6" height="9" viewBox="0 0 6 9"><path d="M1,1 L4.5,4.8 L1,8.5" fill="none" stroke="#dcdcdc" stroke-width="1.4"/></svg><div class="th" style="left:141px"><svg class="abs" style="left:0;top:0" width="16" height="16" viewBox="0 0 16 16"><rect x="1" y="0" width="14" height="16" fill="#e6e8f0"/><circle cx="8" cy="7" r="4.6" fill="none" stroke="#2f8cdb" stroke-width="2.800" stroke-dasharray="3.800,3.426" stroke-dashoffset="1.900"/><circle cx="8" cy="7" r="3.300" fill="#f4f4f8"/><rect x="1" y="0.500" width="3.800" height="3.800" rx="1" fill="#2f8cdb" transform="rotate(45 2.900 2.400)"/><rect x="11.200" y="9" width="3.800" height="3.800" rx="1" fill="#2f8cdb" transform="rotate(45 13.100 10.900)"/><rect x="7" y="5.500" width="2" height="2.500" fill="#8a84a0"/><rect x="5" y="14" width="6" height="1.500" fill="#333"/></svg></div><span class="nm" style="left:164px">table-Table 8</span><div class="tg"></div></div><div class="row" style="top:525px;"><svg class="abs" style="left:3.5px;top:5.5px" width="11.7" height="9" viewBox="0 0 13 10"><path d="M0.6,5 C2.5,1.6 5,0.9 6.5,0.9 C8,0.9 10.5,1.6 12.4,5 C10.5,8.4 8,9.1 6.5,9.1 C5,9.1 2.5,8.4 0.6,5Z" fill="#bebebe"/><circle cx="6.5" cy="5" r="2.9" fill="#535353"/><circle cx="6.5" cy="5" r="1.5" fill="#bebebe"/></svg><div class="abs" style="left:20px;top:0;width:1px;height:21px;background:#474747"></div><div class="abs" style="left:41px;top:0;width:1px;height:21px;background:#4b4b4b"></div><div class="abs" style="left:43.1px;top:1px;width:3.4px;height:18px;background:#4a7dff"></div><div class="abs" style="left:47px;top:0;width:1px;height:21px;background:#474747"></div><div class="abs" style="left:312.5px;top:0;width:1px;height:21px;background:#474747"></div><svg class="abs" style="left:123.0px;top:5.5px" width="6" height="9" viewBox="0 0 6 9"><path d="M1,1 L4.5,4.8 L1,8.5" fill="none" stroke="#dcdcdc" stroke-width="1.4"/></svg><div class="th" style="left:141px"><svg class="abs" style="left:0;top:0" width="16" height="16" viewBox="0 0 16 16"><rect x="1" y="0" width="14" height="16" fill="#e6e8f0"/><circle cx="8" cy="7" r="4.6" fill="none" stroke="#2f8cdb" stroke-width="2.800" stroke-dasharray="3.800,3.426" stroke-dashoffset="1.900"/><circle cx="8" cy="7" r="3.300" fill="#f4f4f8"/><rect x="1" y="0.500" width="3.800" height="3.800" rx="1" fill="#2f8cdb" transform="rotate(45 2.900 2.400)"/><rect x="11.200" y="9" width="3.800" height="3.800" rx="1" fill="#2f8cdb" transform="rotate(45 13.100 10.900)"/><rect x="7" y="5.500" width="2" height="2.500" fill="#8a84a0"/><rect x="5" y="14" width="6" height="1.500" fill="#333"/></svg></div><span class="nm" style="left:164px">table-Table 9</span><div class="tg"></div></div><div class="row" style="top:546px;"><svg class="abs" style="left:3.5px;top:5.5px" width="11.7" height="9" viewBox="0 0 13 10"><path d="M0.6,5 C2.5,1.6 5,0.9 6.5,0.9 C8,0.9 10.5,1.6 12.4,5 C10.5,8.4 8,9.1 6.5,9.1 C5,9.1 2.5,8.4 0.6,5Z" fill="#bebebe"/><circle cx="6.5" cy="5" r="2.9" fill="#535353"/><circle cx="6.5" cy="5" r="1.5" fill="#bebebe"/></svg><div class="abs" style="left:20px;top:0;width:1px;height:21px;background:#474747"></div><div class="abs" style="left:41px;top:0;width:1px;height:21px;background:#4b4b4b"></div><div class="abs" style="left:43.1px;top:1px;width:3.4px;height:18px;background:#4a7dff"></div><div class="abs" style="left:47px;top:0;width:1px;height:21px;background:#474747"></div><div class="abs" style="left:312.5px;top:0;width:1px;height:21px;background:#474747"></div><svg class="abs" style="left:123.0px;top:5.5px" width="6" height="9" viewBox="0 0 6 9"><path d="M1,1 L4.5,4.8 L1,8.5" fill="none" stroke="#dcdcdc" stroke-width="1.4"/></svg><div class="th" style="left:141px"><svg class="abs" style="left:0;top:0" width="16" height="16" viewBox="0 0 16 16"><rect x="1" y="0" width="14" height="16" fill="#e6e8f0"/><circle cx="8" cy="7" r="4.6" fill="none" stroke="#2f8cdb" stroke-width="2.800" stroke-dasharray="3.800,3.426" stroke-dashoffset="1.900"/><circle cx="8" cy="7" r="3.300" fill="#f4f4f8"/><rect x="1" y="0.500" width="3.800" height="3.800" rx="1" fill="#2f8cdb" transform="rotate(45 2.900 2.400)"/><rect x="11.200" y="9" width="3.800" height="3.800" rx="1" fill="#2f8cdb" transform="rotate(45 13.100 10.900)"/><rect x="7" y="5.500" width="2" height="2.500" fill="#8a84a0"/><rect x="5" y="14" width="6" height="1.500" fill="#333"/></svg></div><span class="nm" style="left:164px">table-Table 10</span><div class="tg"></div></div><div class="row" style="top:567px;"><svg class="abs" style="left:3.5px;top:5.5px" width="11.7" height="9" viewBox="0 0 13 10"><path d="M0.6,5 C2.5,1.6 5,0.9 6.5,0.9 C8,0.9 10.5,1.6 12.4,5 C10.5,8.4 8,9.1 6.5,9.1 C5,9.1 2.5,8.4 0.6,5Z" fill="#bebebe"/><circle cx="6.5" cy="5" r="2.9" fill="#535353"/><circle cx="6.5" cy="5" r="1.5" fill="#bebebe"/></svg><div class="abs" style="left:20px;top:0;width:1px;height:21px;background:#474747"></div><div class="abs" style="left:41px;top:0;width:1px;height:21px;background:#4b4b4b"></div><div class="abs" style="left:43.1px;top:1px;width:3.4px;height:18px;background:#4a7dff"></div><div class="abs" style="left:47px;top:0;width:1px;height:21px;background:#474747"></div><div class="abs" style="left:312.5px;top:0;width:1px;height:21px;background:#474747"></div><svg class="abs" style="left:123.0px;top:5.5px" width="6" height="9" viewBox="0 0 6 9"><path d="M1,1 L4.5,4.8 L1,8.5" fill="none" stroke="#dcdcdc" stroke-width="1.4"/></svg><div class="th" style="left:141px"><svg class="abs" style="left:0;top:0" width="16" height="16" viewBox="0 0 16 16"><rect x="1" y="0" width="14" height="16" fill="#e6e8f0"/><circle cx="8" cy="7" r="4.6" fill="none" stroke="#2f8cdb" stroke-width="2.800" stroke-dasharray="3.800,3.426" stroke-dashoffset="1.900"/><circle cx="8" cy="7" r="3.300" fill="#f4f4f8"/><rect x="1" y="0.500" width="3.800" height="3.800" rx="1" fill="#2f8cdb" transform="rotate(45 2.900 2.400)"/><rect x="11.200" y="9" width="3.800" height="3.800" rx="1" fill="#2f8cdb" transform="rotate(45 13.100 10.900)"/><rect x="7" y="5.500" width="2" height="2.500" fill="#8a84a0"/><rect x="5" y="14" width="6" height="1.500" fill="#333"/></svg></div><span class="nm" style="left:164px">table-Table 11</span><div class="tg"></div></div><div class="row" style="top:588px;"><svg class="abs" style="left:3.5px;top:5.5px" width="11.7" height="9" viewBox="0 0 13 10"><path d="M0.6,5 C2.5,1.6 5,0.9 6.5,0.9 C8,0.9 10.5,1.6 12.4,5 C10.5,8.4 8,9.1 6.5,9.1 C5,9.1 2.5,8.4 0.6,5Z" fill="#bebebe"/><circle cx="6.5" cy="5" r="2.9" fill="#535353"/><circle cx="6.5" cy="5" r="1.5" fill="#bebebe"/></svg><div class="abs" style="left:20px;top:0;width:1px;height:21px;background:#474747"></div><div class="abs" style="left:41px;top:0;width:1px;height:21px;background:#4b4b4b"></div><div class="abs" style="left:43.1px;top:1px;width:3.4px;height:18px;background:#4a7dff"></div><div class="abs" style="left:47px;top:0;width:1px;height:21px;background:#474747"></div><div class="abs" style="left:312.5px;top:0;width:1px;height:21px;background:#474747"></div><svg class="abs" style="left:123.0px;top:5.5px" width="6" height="9" viewBox="0 0 6 9"><path d="M1,1 L4.5,4.8 L1,8.5" fill="none" stroke="#dcdcdc" stroke-width="1.4"/></svg><div class="th" style="left:141px"><svg class="abs" style="left:0;top:0" width="16" height="16" viewBox="0 0 16 16"><rect x="1" y="0" width="14" height="16" fill="#e6e8f0"/><circle cx="8" cy="7" r="4.6" fill="none" stroke="#2f8cdb" stroke-width="2.800" stroke-dasharray="3.800,3.426" stroke-dashoffset="1.900"/><circle cx="8" cy="7" r="3.300" fill="#f4f4f8"/><rect x="1" y="0.500" width="3.800" height="3.800" rx="1" fill="#2f8cdb" transform="rotate(45 2.900 2.400)"/><rect x="11.200" y="9" width="3.800" height="3.800" rx="1" fill="#2f8cdb" transform="rotate(45 13.100 10.900)"/><rect x="7" y="5.500" width="2" height="2.500" fill="#8a84a0"/><rect x="5" y="14" width="6" height="1.500" fill="#333"/></svg></div><span class="nm" style="left:164px">table-Table 12</span><div class="tg"></div></div><div class="row" style="top:609px;"><svg class="abs" style="left:3.5px;top:5.5px" width="11.7" height="9" viewBox="0 0 13 10"><path d="M0.6,5 C2.5,1.6 5,0.9 6.5,0.9 C8,0.9 10.5,1.6 12.4,5 C10.5,8.4 8,9.1 6.5,9.1 C5,9.1 2.5,8.4 0.6,5Z" fill="#bebebe"/><circle cx="6.5" cy="5" r="2.9" fill="#535353"/><circle cx="6.5" cy="5" r="1.5" fill="#bebebe"/></svg><div class="abs" style="left:20px;top:0;width:1px;height:21px;background:#474747"></div><div class="abs" style="left:41px;top:0;width:1px;height:21px;background:#4b4b4b"></div><div class="abs" style="left:43.1px;top:1px;width:3.4px;height:18px;background:#4a7dff"></div><div class="abs" style="left:47px;top:0;width:1px;height:21px;background:#474747"></div><div class="abs" style="left:312.5px;top:0;width:1px;height:21px;background:#474747"></div><svg class="abs" style="left:123.0px;top:5.5px" width="6" height="9" viewBox="0 0 6 9"><path d="M1,1 L4.5,4.8 L1,8.5" fill="none" stroke="#dcdcdc" stroke-width="1.4"/></svg><div class="th" style="left:141px"><svg class="abs" style="left:0;top:0" width="16" height="16" viewBox="0 0 16 16"><rect x="1" y="0" width="14" height="16" fill="#e6e8f0"/><circle cx="8" cy="7" r="4.6" fill="none" stroke="#2f8cdb" stroke-width="2.800" stroke-dasharray="3.800,3.426" stroke-dashoffset="1.900"/><circle cx="8" cy="7" r="3.300" fill="#f4f4f8"/><rect x="1" y="0.500" width="3.800" height="3.800" rx="1" fill="#2f8cdb" transform="rotate(45 2.900 2.400)"/><rect x="11.200" y="9" width="3.800" height="3.800" rx="1" fill="#2f8cdb" transform="rotate(45 13.100 10.900)"/><rect x="7" y="5.500" width="2" height="2.500" fill="#8a84a0"/><rect x="5" y="14" width="6" height="1.500" fill="#333"/></svg></div><span class="nm" style="left:164px">table-Table 13</span><div class="tg"></div></div><div class="row" style="top:630px;"><svg class="abs" style="left:3.5px;top:5.5px" width="11.7" height="9" viewBox="0 0 13 10"><path d="M0.6,5 C2.5,1.6 5,0.9 6.5,0.9 C8,0.9 10.5,1.6 12.4,5 C10.5,8.4 8,9.1 6.5,9.1 C5,9.1 2.5,8.4 0.6,5Z" fill="#bebebe"/><circle cx="6.5" cy="5" r="2.9" fill="#535353"/><circle cx="6.5" cy="5" r="1.5" fill="#bebebe"/></svg><div class="abs" style="left:20px;top:0;width:1px;height:21px;background:#474747"></div><div class="abs" style="left:41px;top:0;width:1px;height:21px;background:#4b4b4b"></div><div class="abs" style="left:43.1px;top:1px;width:3.4px;height:18px;background:#4a7dff"></div><div class="abs" style="left:47px;top:0;width:1px;height:21px;background:#474747"></div><div class="abs" style="left:312.5px;top:0;width:1px;height:21px;background:#474747"></div><svg class="abs" style="left:123.0px;top:5.5px" width="6" height="9" viewBox="0 0 6 9"><path d="M1,1 L4.5,4.8 L1,8.5" fill="none" stroke="#dcdcdc" stroke-width="1.4"/></svg><div class="th" style="left:141px"><svg class="abs" style="left:0;top:0" width="16" height="16" viewBox="0 0 16 16"><rect x="1" y="0" width="14" height="16" fill="#e6e8f0"/><circle cx="8" cy="7" r="4.6" fill="none" stroke="#2f8cdb" stroke-width="2.800" stroke-dasharray="3.800,3.426" stroke-dashoffset="1.900"/><circle cx="8" cy="7" r="3.300" fill="#f4f4f8"/><rect x="1" y="0.500" width="3.800" height="3.800" rx="1" fill="#2f8cdb" transform="rotate(45 2.900 2.400)"/><rect x="11.200" y="9" width="3.800" height="3.800" rx="1" fill="#2f8cdb" transform="rotate(45 13.100 10.900)"/><rect x="7" y="5.500" width="2" height="2.500" fill="#8a84a0"/><rect x="5" y="14" width="6" height="1.500" fill="#333"/></svg></div><span class="nm" style="left:164px">table-Table 14</span><div class="tg"></div></div><div class="row" style="top:651px;"><svg class="abs" style="left:3.5px;top:5.5px" width="11.7" height="9" viewBox="0 0 13 10"><path d="M0.6,5 C2.5,1.6 5,0.9 6.5,0.9 C8,0.9 10.5,1.6 12.4,5 C10.5,8.4 8,9.1 6.5,9.1 C5,9.1 2.5,8.4 0.6,5Z" fill="#bebebe"/><circle cx="6.5" cy="5" r="2.9" fill="#535353"/><circle cx="6.5" cy="5" r="1.5" fill="#bebebe"/></svg><div class="abs" style="left:20px;top:0;width:1px;height:21px;background:#474747"></div><div class="abs" style="left:41px;top:0;width:1px;height:21px;background:#4b4b4b"></div><div class="abs" style="left:43.1px;top:1px;width:3.4px;height:18px;background:#4a7dff"></div><div class="abs" style="left:47px;top:0;width:1px;height:21px;background:#474747"></div><div class="abs" style="left:312.5px;top:0;width:1px;height:21px;background:#474747"></div><svg class="abs" style="left:123.0px;top:5.5px" width="6" height="9" viewBox="0 0 6 9"><path d="M1,1 L4.5,4.8 L1,8.5" fill="none" stroke="#dcdcdc" stroke-width="1.4"/></svg><div class="th" style="left:141px"><svg class="abs" style="left:0;top:0" width="16" height="16" viewBox="0 0 16 16"><rect x="1" y="0" width="14" height="16" fill="#e6e8f0"/><circle cx="8" cy="7" r="4.6" fill="none" stroke="#2f8cdb" stroke-width="2.800" stroke-dasharray="3.800,3.426" stroke-dashoffset="1.900"/><circle cx="8" cy="7" r="3.300" fill="#f4f4f8"/><rect x="1" y="0.500" width="3.800" height="3.800" rx="1" fill="#2f8cdb" transform="rotate(45 2.900 2.400)"/><rect x="11.200" y="9" width="3.800" height="3.800" rx="1" fill="#2f8cdb" transform="rotate(45 13.100 10.900)"/><rect x="7" y="5.500" width="2" height="2.500" fill="#8a84a0"/><rect x="5" y="14" width="6" height="1.500" fill="#333"/></svg></div><span class="nm" style="left:164px">table-Table 15</span><div class="tg"></div></div><div class="row" style="top:672px;"><svg class="abs" style="left:3.5px;top:5.5px" width="11.7" height="9" viewBox="0 0 13 10"><path d="M0.6,5 C2.5,1.6 5,0.9 6.5,0.9 C8,0.9 10.5,1.6 12.4,5 C10.5,8.4 8,9.1 6.5,9.1 C5,9.1 2.5,8.4 0.6,5Z" fill="#bebebe"/><circle cx="6.5" cy="5" r="2.9" fill="#535353"/><circle cx="6.5" cy="5" r="1.5" fill="#bebebe"/></svg><div class="abs" style="left:20px;top:0;width:1px;height:21px;background:#474747"></div><div class="abs" style="left:41px;top:0;width:1px;height:21px;background:#4b4b4b"></div><div class="abs" style="left:43.1px;top:1px;width:3.4px;height:18px;background:#4a7dff"></div><div class="abs" style="left:47px;top:0;width:1px;height:21px;background:#474747"></div><div class="abs" style="left:312.5px;top:0;width:1px;height:21px;background:#474747"></div><svg class="abs" style="left:100.0px;top:5.5px" width="6" height="9" viewBox="0 0 6 9"><path d="M1,1 L4.5,4.8 L1,8.5" fill="none" stroke="#dcdcdc" stroke-width="1.4"/></svg><div class="th" style="left:118px"><div class="abs" style="left:0.5px;top:3.5px;width:2px;height:9px;background:repeating-linear-gradient(180deg,#3f8fd0 0 1.5px,#dfe8f4 1.5px 3px)"></div><div class="abs" style="left:13.5px;top:3.5px;width:2px;height:9px;background:repeating-linear-gradient(180deg,#3f8fd0 0 1.5px,#dfe8f4 1.5px 3px)"></div></div><span class="nm" style="left:141px">side tables</span><div class="tg"></div></div><div class="row" style="top:693px;"><svg class="abs" style="left:3.5px;top:5.5px" width="11.7" height="9" viewBox="0 0 13 10"><path d="M0.6,5 C2.5,1.6 5,0.9 6.5,0.9 C8,0.9 10.5,1.6 12.4,5 C10.5,8.4 8,9.1 6.5,9.1 C5,9.1 2.5,8.4 0.6,5Z" fill="#bebebe"/><circle cx="6.5" cy="5" r="2.9" fill="#535353"/><circle cx="6.5" cy="5" r="1.5" fill="#bebebe"/></svg><div class="abs" style="left:20px;top:0;width:1px;height:21px;background:#474747"></div><div class="abs" style="left:41px;top:0;width:1px;height:21px;background:#4b4b4b"></div><div class="abs" style="left:43.1px;top:1px;width:3.4px;height:18px;background:#4a7dff"></div><div class="abs" style="left:47px;top:0;width:1px;height:21px;background:#474747"></div><div class="abs" style="left:312.5px;top:0;width:1px;height:21px;background:#474747"></div><svg class="abs" style="left:100.0px;top:5.5px" width="6" height="9" viewBox="0 0 6 9"><path d="M1,1 L4.5,4.8 L1,8.5" fill="none" stroke="#dcdcdc" stroke-width="1.4"/></svg><div class="th" style="left:118px"><div class="abs" style="left:0.5px;top:5px;width:15px;height:6.5px;background:#7ab55f"></div><div class="abs" style="left:2px;top:4px;width:12px;height:5px;background:repeating-linear-gradient(90deg,#3f8fd0 0 2px,#cfe0f0 2px 3.5px)"></div><div class="abs" style="left:0.5px;top:11.5px;width:15px;height:1.5px;background:#999"></div></div><span class="nm" style="left:141px">green room</span><div class="tg"></div></div><div class="row" style="top:714px;"><svg class="abs" style="left:3.5px;top:5.5px" width="11.7" height="9" viewBox="0 0 13 10"><path d="M0.6,5 C2.5,1.6 5,0.9 6.5,0.9 C8,0.9 10.5,1.6 12.4,5 C10.5,8.4 8,9.1 6.5,9.1 C5,9.1 2.5,8.4 0.6,5Z" fill="#bebebe"/><circle cx="6.5" cy="5" r="2.9" fill="#535353"/><circle cx="6.5" cy="5" r="1.5" fill="#bebebe"/></svg><div class="abs" style="left:20px;top:0;width:1px;height:21px;background:#474747"></div><div class="abs" style="left:41px;top:0;width:1px;height:21px;background:#4b4b4b"></div><div class="abs" style="left:43.1px;top:1px;width:3.4px;height:18px;background:#4a7dff"></div><div class="abs" style="left:47px;top:0;width:1px;height:21px;background:#474747"></div><div class="abs" style="left:312.5px;top:0;width:1px;height:21px;background:#474747"></div><svg class="abs" style="left:77.0px;top:5.5px" width="6" height="9" viewBox="0 0 6 9"><path d="M1,1 L4.5,4.8 L1,8.5" fill="none" stroke="#dcdcdc" stroke-width="1.4"/></svg><div class="th" style="left:95px"><div class="abs" style="left:1px;top:3px;width:14px;height:10px;background:#f1f1f3;border:1px solid #dcdcdc"></div></div><span class="nm" style="left:118px">office-ground</span><div class="tg"></div></div><div class="row" style="top:735px;"><svg class="abs" style="left:3.5px;top:5.5px" width="11.7" height="9" viewBox="0 0 13 10"><path d="M0.6,5 C2.5,1.6 5,0.9 6.5,0.9 C8,0.9 10.5,1.6 12.4,5 C10.5,8.4 8,9.1 6.5,9.1 C5,9.1 2.5,8.4 0.6,5Z" fill="#bebebe"/><circle cx="6.5" cy="5" r="2.9" fill="#535353"/><circle cx="6.5" cy="5" r="1.5" fill="#bebebe"/></svg><div class="abs" style="left:20px;top:0;width:1px;height:21px;background:#474747"></div><div class="abs" style="left:41px;top:0;width:1px;height:21px;background:#4b4b4b"></div><div class="abs" style="left:43.1px;top:1px;width:3.4px;height:18px;background:#4a7dff"></div><div class="abs" style="left:47px;top:0;width:1px;height:21px;background:#474747"></div><div class="abs" style="left:312.5px;top:0;width:1px;height:21px;background:#474747"></div><svg class="abs" style="left:77.0px;top:5.5px" width="6" height="9" viewBox="0 0 6 9"><path d="M1,1 L4.5,4.8 L1,8.5" fill="none" stroke="#dcdcdc" stroke-width="1.4"/></svg><div class="th" style="left:95px"><div class="abs" style="left:0;top:0;width:16px;height:16px;background:#e6f6dc"></div><div class="abs" style="left:2px;top:4px;width:12px;height:8px;border:1px dotted #8cbf74;background:#cfeac0"></div></div><span class="nm" style="left:118px">map-background</span><div class="tg"></div></div><svg class="abs" style="left:340px;top:0" width="7" height="7" viewBox="0 0 7 7"><path d="M0,0 h7 v7z" fill="#d0d0d0"/></svg></div><span class="abs" style="left:5.5px;top:822px;font-size:11px;letter-spacing:-.6px;color:#e0e0e0">1 Layer</span><svg class="abs" style="left:188px;top:820px" width="160" height="16" viewBox="1267 851 160 16"><path d="M1275.5,855 h-5 v9.5 h9.5 v-5" fill="none" stroke="#d0d0d0" stroke-width="1.2"/><path d="M1274.5,860.5 l6,-6 M1276.5,853.7 h4.8 v4.8" fill="none" stroke="#d0d0d0" stroke-width="1.3"/><circle cx="1303.5" cy="857.5" r="3.8" fill="none" stroke="#d0d0d0" stroke-width="1.4"/><path d="M1300.8,860.5 L1296.5,865" stroke="#d0d0d0" stroke-width="1.8"/><rect x="1322.5" y="854.5" width="7" height="7" fill="none" stroke="#d0d0d0" stroke-width="1.2"/><rect x="1325.5" y="857.5" width="7" height="7" fill="#8a8a8a" stroke="#d0d0d0" stroke-width="1.2"/><rect x="1351" y="856" width="7.5" height="7" fill="#757575"/><path d="M1345.5,854 v4 h4 M1347.5,856 l2,2 l-2,2" fill="none" stroke="#757575" stroke-width="1.1"/><path d="M1375,854.5 h9 v9.5 h-5.5 v-4 h-3.5z" fill="#d0d0d0"/><path d="M1374.8,860.5 h3.2 v3.3z" fill="#d0d0d0"/><path d="M1400,855.5 h10.5 M1403.5,855 v-1.3 h3.5 v1.3 M1401.3,857 h8 l-0.6,8 h-6.8z" fill="none" stroke="#d0d0d0" stroke-width="1.2"/><path d="M1403.8,858.5 v5 M1405.3,858.5 v5 M1406.8,858.5 v5" stroke="#d0d0d0" stroke-width=".8"/></svg></div><div id="taskbar" class="abs"><svg class="abs" style="left:7px;top:-5.600px" width="40" height="40" viewBox="0 0 40 40"><defs><radialGradient id="orb" cx=".5" cy=".35" r=".7"><stop offset="0" stop-color="#3c8d9a"/><stop offset=".6" stop-color="#226778"/><stop offset="1" stop-color="#123f52"/></radialGradient></defs><circle cx="20" cy="21" r="18.6" fill="url(#orb)" stroke="#a4cdd6" stroke-width="1.1" stroke-opacity=".85"/><path d="M12.500,29.500 L12.500,26.500 C9.500,25 7.800,21.500 8.600,18.500 C9.400,14 14,11 20,11 C26,11 30.600,14 31.400,18.500 C32.200,21.500 30.500,25 27.500,26.500 L27.500,29.500 Z" fill="#2b8a98" stroke="#f6c728" stroke-width="1.500" stroke-linejoin="round"/><path d="M12,15.500 A9.500,9.500 0 0 1 28,15.500" fill="none" stroke="#f39a2a" stroke-width="1.300" stroke-dasharray="2.400,1.100"/><g fill="none" stroke="#49aab4" stroke-width="1.300"><path d="M11.500,23 A8.800,8.800 0 0 1 28.500,23"/><path d="M13.800,24.300 A6.500,6.500 0 0 1 26.200,24.300"/><path d="M16,25.500 A4.300,4.300 0 0 1 24,25.500"/></g><circle cx="20" cy="26.500" r="2" fill="#4f9fc8"/></svg><div class="abs" style="left:55px;top:0.5px;width:257px;height:29.5px;background:#2e2e2e;border:1px solid #575757;border-bottom:none"></div><svg class="abs" style="left:66px;top:6px" width="18" height="18" viewBox="0 0 18 18"><circle cx="10.5" cy="7" r="5.2" fill="none" stroke="#e8e8e8" stroke-width="1.3"/><path d="M6.8,10.8 L1,16.5" stroke="#e8e8e8" stroke-width="1.3"/></svg><span class="abs" style="left:94px;top:6px;font-size:15.5px;color:#e8e8e8;letter-spacing:-.85px">Search</span><svg class="abs" style="left:256px;top:0" width="55" height="30" viewBox="256 870 55 30"><defs><linearGradient id="skg" x1="0" y1="0" x2="0" y2="1"><stop offset="0" stop-color="#fdfdff"/><stop offset=".6" stop-color="#e4e2f4"/><stop offset="1" stop-color="#9a92d2"/></linearGradient></defs><path d="M267.500,875 C269,873.800 272,873.800 273.300,875 L276,884 C278.500,886 278.500,889 276.500,890.500 L263,893.500 C260,893.500 259.500,891.500 261,890 C264,888 266.500,882 267.500,875Z" fill="url(#skg)"/><path d="M262,896.300 L281.700,890.300" stroke="#c9cfe0" stroke-width="1.500"/><path d="M266,892.800 l0.500,2.500 M274,890.800 l1,2.500" stroke="#b0b6cc" stroke-width="1"/><g fill="#333"><circle cx="269.800" cy="880.500" r=".6"/><circle cx="268.500" cy="883.500" r=".6"/><circle cx="267" cy="886.500" r=".6"/><circle cx="265.400" cy="889" r=".6"/></g><path d="M283.600,878 L285.400,897" stroke="#b9bfd0" stroke-width="1"/><path d="M283.100,874 L283.800,880" stroke="#f0a050" stroke-width="2.600"/><path d="M283.300,893.200 h4" stroke="#8f95b0" stroke-width="1"/><path d="M291.500,875.500 L291,898 M296.500,875.500 L296,898" stroke="#b9cdf0" stroke-width="3.800" stroke-linecap="round"/><path d="M291.400,883 l-0.200,8 M296.400,883 l-0.200,8" stroke="#7f9fd8" stroke-width="1"/><path d="M291.200,892 l-0.100,4 M296.200,892 l-0.100,4" stroke="#f0a860" stroke-width="3.600"/><path d="M305,880 L299.800,897.500" stroke="#b9bfd0" stroke-width="1"/><path d="M306,875.500 L304.600,881" stroke="#f0a050" stroke-width="2.600"/><path d="M298.800,893.500 h4" stroke="#8f95b0" stroke-width="1"/></svg><svg class="abs" style="left:324px;top:6px" width="18" height="18" viewBox="0 0 20 20"><path d="M10,1.8 a8,8 0 1 1 -4.2,14.9 L1.8,18 L3.1,14.2 A8,8 0 0 1 10,1.8Z" fill="none" stroke="#25d366" stroke-width="1.9"/><path d="M6.8,5.8 c-0.8,0.6 -1,1.8 -0.4,3.2 c0.9,2 2.8,3.8 4.8,4.6 c1.2,0.5 2.3,0.2 2.9,-0.6 l0.2,-1.1 l-2,-1 l-1,1 c-1.2,-0.5 -2.3,-1.600 -2.900,-2.800 l0.9,-1 l-0.9,-2.100z" fill="#25d366"/></svg><svg class="abs" style="left:359px;top:4px" width="24" height="22" viewBox="0 0 24 22"><path d="M10,5 C4,5 1,9.5 1.500,13.500 C2,17.500 6,19.500 9,18.500 C11,17.800 10,15.500 12,15 C15,14.300 18,15 18.500,11 C19,7.500 15,5 10,5Z" fill="#f1ead8" stroke="#8a99b8" stroke-width="1.2"/><circle cx="6" cy="10" r="1.5" fill="#e0483a"/><circle cx="10" cy="8" r="1.5" fill="#f0b030"/><circle cx="14.5" cy="9.500" r="1.500" fill="#3aa0e0"/><circle cx="5.500" cy="14" r="1.500" fill="#50b060"/><path d="M20,1 l1.500,0.500 l-3,13 l-2,-0.500z" fill="#e8913a"/><path d="M16.500,14 l2,0.500 l-1.500,4.500z" fill="#8a5a30"/></svg><svg class="abs" style="left:396px;top:6px" width="22" height="18" viewBox="0 0 22 18"><path d="M1,1.500 h7 l2,2 h11 v13 h-20z" fill="#f4c443"/><path d="M1,5 h20 v11.500 h-20z" fill="#fbd766"/><path d="M6,10 h10 v6.500 h-10z" fill="#3b8fe0"/><path d="M8.500,12.500 h5 v4 h-5z" fill="#fbd766"/></svg><svg class="abs" style="left:433px;top:4px" width="22" height="22" viewBox="0 0 22 22"><circle cx="11" cy="11" r="10" fill="#e33b2e"/><path d="M11,11 L2.300,6 A10,10 0 0 0 6,19.660 Z" fill="#2ca14a"/><path d="M11,11 L6,19.660 A10,10 0 0 0 20.900,9.500 L11,9.500Z" fill="#fbc116"/><path d="M11,11 L2.340,6 A10,10 0 0 1 20.800,9 L11,9Z" fill="#e33b2e"/><circle cx="11" cy="11" r="4.600" fill="#fff"/><circle cx="11" cy="11" r="3.600" fill="#4a8af4"/><circle cx="16.500" cy="16.500" r="4.500" fill="#6a7a30" stroke="#ddd" stroke-width=".6"/><circle cx="16.500" cy="16" r="1.800" fill="#e8c080"/></svg><svg class="abs" style="left:470px;top:4px" width="22" height="22" viewBox="0 0 22 22"><defs><linearGradient id="ffg" x1="0" y1="0" x2="0" y2="1"><stop offset="0" stop-color="#ffcf30"/><stop offset=".5" stop-color="#ff7a18"/><stop offset="1" stop-color="#e8253a"/></linearGradient></defs><circle cx="11" cy="12" r="9.500" fill="url(#ffg)"/><path d="M14,1 c1,3 4,4 5,8 l-4,-2z M3,5 c1,-1 2,-2 4,-2 l1,4z" fill="#ffb020"/><circle cx="11.500" cy="12" r="5" fill="#7b3fe0"/><path d="M6.500,9 c2,-1 4,0 5,1.500 c-2,0 -3,1 -3,3 c-2,-0.500 -3,-2.500 -2,-4.500z" fill="#ff9a20"/></svg><div class="abs" style="left:500px;top:0;width:36px;height:30px;background:#333"></div><div class="abs" style="left:510px;top:7px;width:16px;height:15px;background:#2a1200;border:1.3px solid #ff9a00;border-radius:1px;color:#ff9a00;font-size:9.500px;font-weight:bold;line-height:12px;text-align:center;letter-spacing:-.3px">Ai</div><div class="abs" style="left:356px;top:27.500px;width:28px;height:2.500px;background:#7cbcf0"></div><div class="abs" style="left:393px;top:27.500px;width:28px;height:2.500px;background:#7cbcf0"></div><div class="abs" style="left:430px;top:27.500px;width:28px;height:2.500px;background:#7cbcf0"></div><div class="abs" style="left:467px;top:27.500px;width:28px;height:2.500px;background:#7cbcf0"></div><div class="abs" style="left:500px;top:27.500px;width:36px;height:2.500px;background:#7cbcf0"></div><div class="abs" style="left:376px;top:27.500px;width:8px;height:2.500px;background:#5a88ac"></div><div class="abs" style="left:413px;top:27.500px;width:8px;height:2.500px;background:#5a88ac"></div><svg class="abs" style="left:1307px;top:11px" width="14" height="8" viewBox="0 0 14 8"><path d="M1,7 L7,1.200 L13,7" fill="none" stroke="#f0f0f0" stroke-width="1.300"/></svg><span class="abs" style="left:1335px;top:8px;font-size:12.500px;color:#f4f4f4;letter-spacing:-.69px">2:06 PM</span><svg class="abs" style="left:1397px;top:6px" width="20" height="20" viewBox="0 0 20 20"><path d="M1.500,1.500 h16 v12.500 h-9 l-3.500,3.500 v-3.500 h-3.500z" fill="#f4f4f4"/><path d="M4.500,5 h10 M4.500,8 h10 M4.500,11 h6" stroke="#000" stroke-width="1.100"/><circle cx="15.500" cy="14.500" r="3.200" fill="#000" stroke="#f4f4f4" stroke-width="1.100"/><path d="M14.300,15.500 l2.400,-2.200" stroke="#f4f4f4" stroke-width="1"/></svg><div class="abs" style="left:1435px;top:0;width:1px;height:30px;background:#666"></div></div></body></html>
